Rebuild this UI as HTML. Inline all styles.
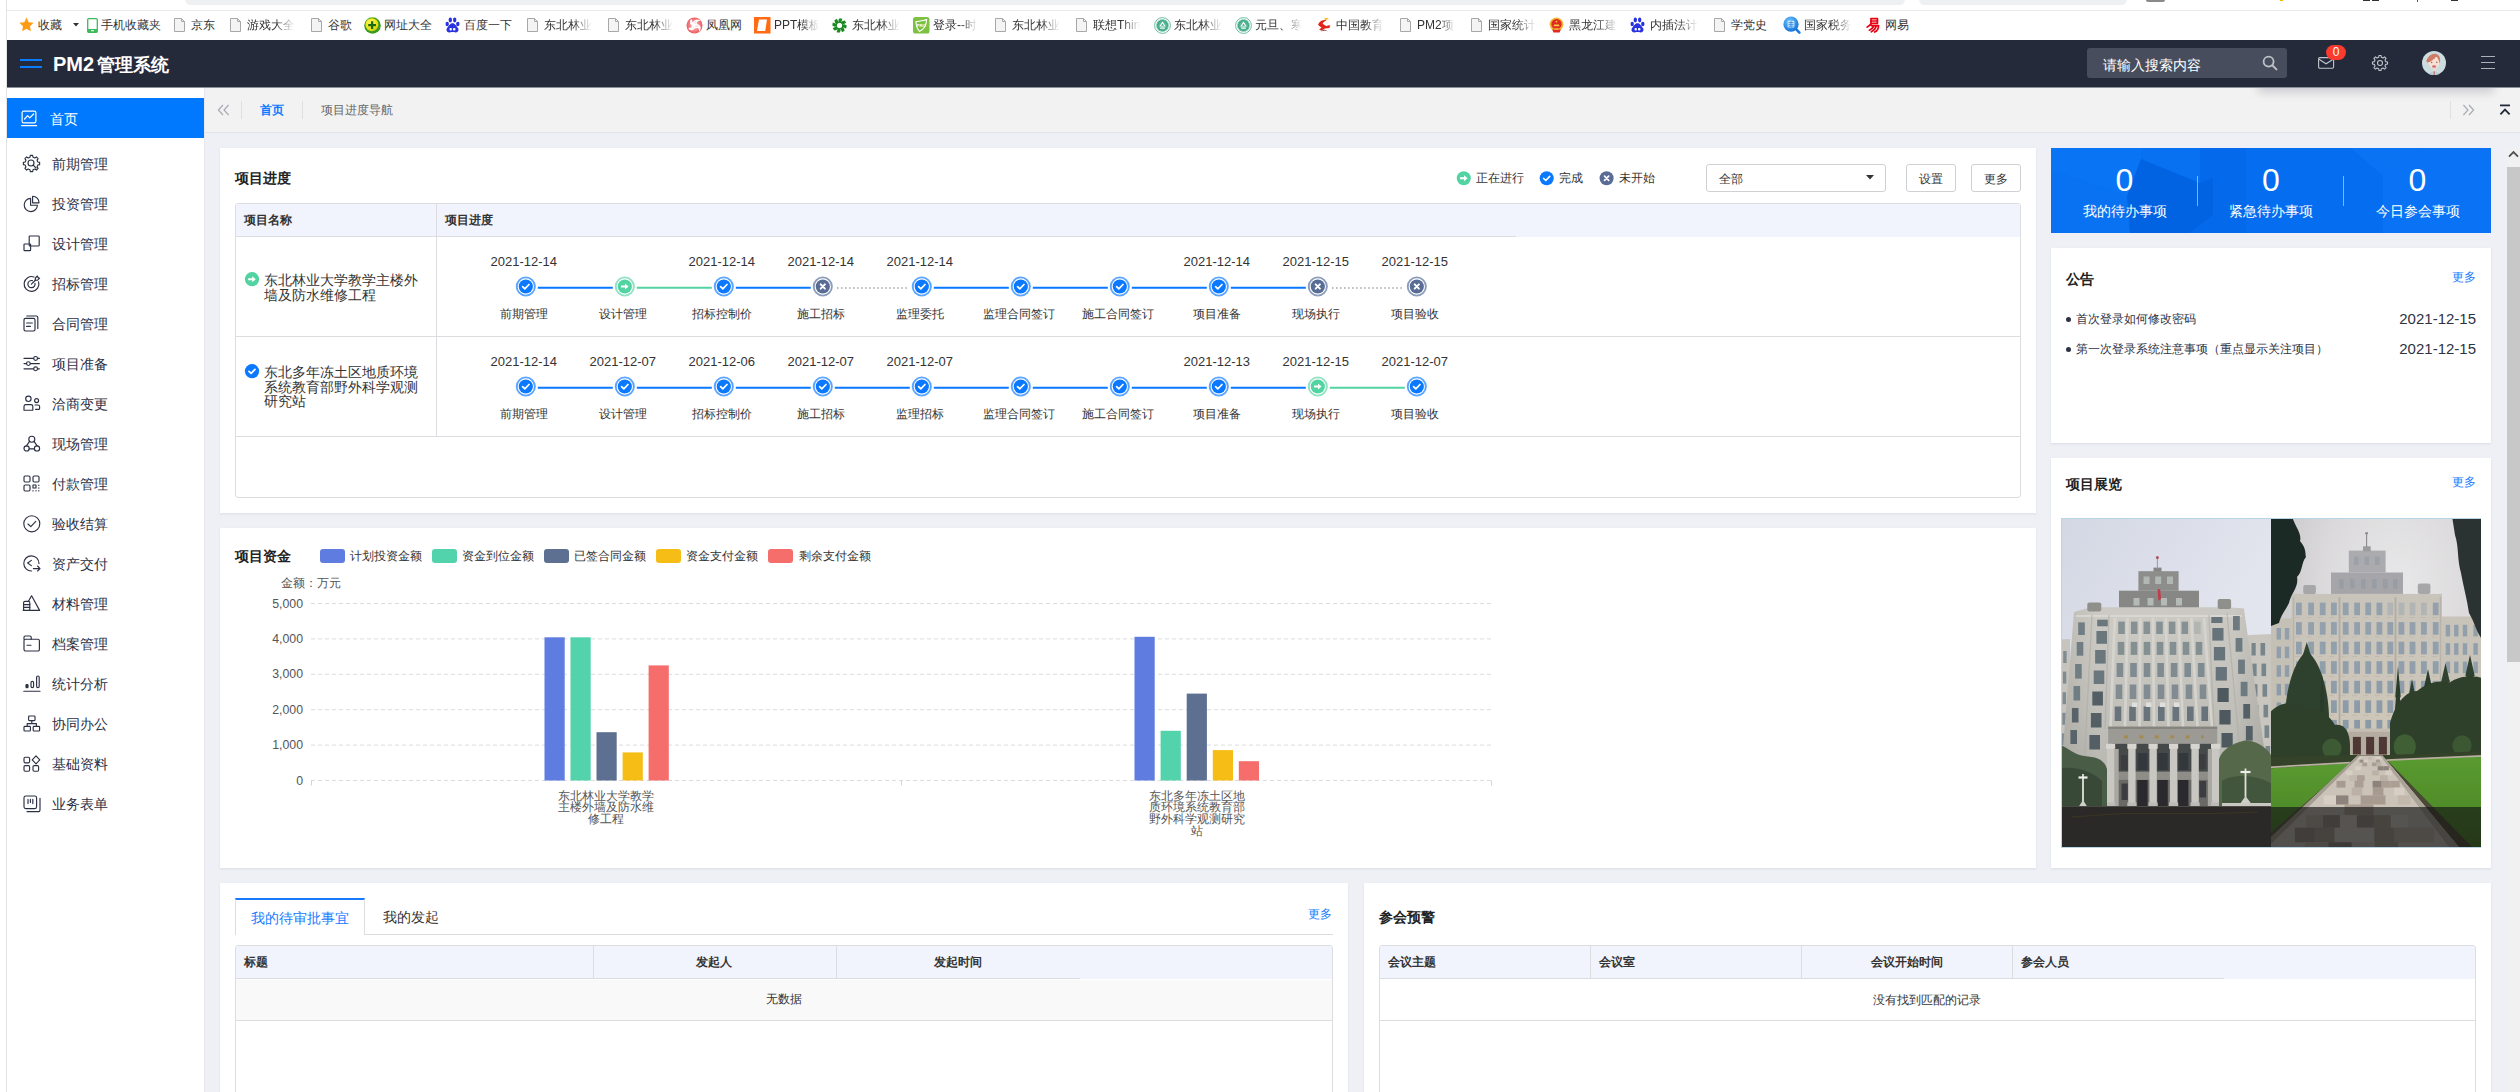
<!DOCTYPE html>
<html lang="zh"><head><meta charset="utf-8"><title>PM2</title>
<style>
*{box-sizing:border-box;margin:0;padding:0}
html,body{width:2520px;height:1092px;overflow:hidden;background:#fff;font-family:"Liberation Sans",sans-serif;color:#333;font-size:12px}
.a{position:absolute}
.t{position:absolute;white-space:nowrap;line-height:20px;height:20px}
.c{text-align:center}
.r{text-align:right}
.b{font-weight:bold}
svg{position:absolute;overflow:visible}
i{display:inline-block;width:1em;text-align:center;font-style:normal}
.panel{position:absolute;background:#fff;box-shadow:0 1px 2px rgba(180,186,200,.35)}
.tbl{position:absolute;border:1px solid #dcdde0;border-radius:3px}
.hl{position:absolute;height:1px;background:#dcdde0}
.vl{position:absolute;width:1px;background:#dcdde0}
.bm{position:absolute;top:15px;height:20px;line-height:20px;font-size:12px;color:#333;white-space:nowrap;overflow:hidden}
.fade{-webkit-mask-image:linear-gradient(90deg,#000 60%,transparent 100%);mask-image:linear-gradient(90deg,#000 60%,transparent 100%)}
.mi{position:absolute;left:52px;font-size:14px;color:#2b3044;height:20px;line-height:20px;white-space:nowrap}
.btn{position:absolute;border:1px solid #cfd0d4;border-radius:3px;background:#fff;font-size:12px;text-align:center;color:#333}
</style></head><body><div class="a" style="left:0;top:0;width:2520px;height:1092px;overflow:hidden">

<div class="a" style="left:0;top:0;width:2520px;height:40px;background:#fff"></div>
<div class="a" style="left:185px;top:-6px;width:1720px;height:11px;border-radius:6px;background:#eff0f2"></div>
<div class="a" style="left:1919px;top:-6px;width:208px;height:11px;border-radius:6px;background:#eff0f2"></div>
<div class="a" style="left:2146px;top:-2px;width:19px;height:4px;border-radius:2px;background:#8a8a8a"></div>
<div class="a" style="left:2363px;top:0;width:7px;height:1px;background:#333"></div><div class="a" style="left:2372px;top:0;width:7px;height:1px;background:#333"></div><div class="a" style="left:2417px;top:0;width:1px;height:2px;background:#555"></div><div class="a" style="left:2451px;top:0;width:7px;height:1px;background:#333"></div><div class="a" style="left:2280px;top:0;width:3px;height:1px;background:#f5b400"></div>
<div class="a" style="left:7px;top:10px;width:2513px;height:1px;background:#ebebeb"></div>
<div class="a" style="left:0;top:0;width:7px;height:1092px;background:#fff;border-right:1px solid #e3e3e3"></div>
<svg class="a" style="left:19px;top:17px" width="15" height="15" viewBox="0 0 15 15" ><path d="M7.5 0.6L9.7 5.2L14.6 5.8L11 9.2L11.9 14.2L7.5 11.8L3.1 14.2L4 9.2L0.4 5.8L5.3 5.2Z" fill="#ff9b12"/></svg>
<div class="bm" style="left:38px"><i>收</i><i>藏</i></div>
<svg class="a" style="left:73px;top:23px" width="6" height="4" viewBox="0 0 6 4" ><path d="M0 0H6L3 3.6Z" fill="#333"/></svg>
<svg class="a" style="left:87px;top:18px" width="11" height="15" viewBox="0 0 11 15" ><rect x="0.7" y="0.7" width="9.6" height="13.6" rx="1.1" fill="#fff" stroke="#3dbb5c" stroke-width="1.3"/><rect x="0.8" y="11" width="9.4" height="3.2" fill="#3dbb5c"/><rect x="4" y="12.2" width="3" height="1" fill="#fff"/></svg>
<div class="bm" style="left:101px"><i>手</i><i>机</i><i>收</i><i>藏</i><i>夹</i></div>
<svg class="a" style="left:174px;top:18px" width="12" height="15" viewBox="0 0 12 15" ><path d="M0.5 0.5H7.5L10.5 3.5V13.5H0.5Z" fill="#f4f4f4" stroke="#a8a8a8" stroke-width="1"/><path d="M7.5 0.5V3.5H10.5" fill="none" stroke="#a8a8a8" stroke-width="1"/></svg>
<div class="bm" style="left:191px"><i>京</i><i>东</i></div>
<svg class="a" style="left:230px;top:18px" width="12" height="15" viewBox="0 0 12 15" ><path d="M0.5 0.5H7.5L10.5 3.5V13.5H0.5Z" fill="#f4f4f4" stroke="#a8a8a8" stroke-width="1"/><path d="M7.5 0.5V3.5H10.5" fill="none" stroke="#a8a8a8" stroke-width="1"/></svg>
<div class="bm fade" style="left:247px;width:48px"><i>游</i><i>戏</i><i>大</i><i>全</i></div>
<svg class="a" style="left:311px;top:18px" width="12" height="15" viewBox="0 0 12 15" ><path d="M0.5 0.5H7.5L10.5 3.5V13.5H0.5Z" fill="#f4f4f4" stroke="#a8a8a8" stroke-width="1"/><path d="M7.5 0.5V3.5H10.5" fill="none" stroke="#a8a8a8" stroke-width="1"/></svg>
<div class="bm" style="left:328px"><i>谷</i><i>歌</i></div>
<svg class="a" style="left:364px;top:17px" width="17" height="17" viewBox="0 0 17 17" ><defs><radialGradient id="g360" cx="42%" cy="38%" r="60%"><stop offset="0" stop-color="#fffb6a"/><stop offset="0.75" stop-color="#ece414"/><stop offset="1" stop-color="#c9d018"/></radialGradient></defs><circle cx="8.5" cy="8.5" r="8.3" fill="#3a9a1e"/><path d="M1.2 5A8.3 8.3 0 0 1 11 0.6A9 9 0 0 0 1.2 5Z" fill="#e9e21a"/><circle cx="7.9" cy="7.7" r="6.5" fill="url(#g360)"/><path d="M4.2 8.1H12M8.1 4.2V12" stroke="#1d6a12" stroke-width="2.3"/></svg>
<div class="bm" style="left:384px"><i>网</i><i>址</i><i>大</i><i>全</i></div>
<svg class="a" style="left:445px;top:17px" width="15" height="16" viewBox="0 0 15 16" ><g fill="#2932e1"><ellipse cx="2.2" cy="7" rx="1.7" ry="2.3"/><ellipse cx="5.3" cy="3" rx="1.7" ry="2.4"/><ellipse cx="9.7" cy="3" rx="1.7" ry="2.4"/><ellipse cx="12.8" cy="7" rx="1.7" ry="2.3"/><path d="M7.5 6.2C10 6.2 11.2 9 12.8 10.8C14.2 12.6 13.4 15.4 10.8 15.4C9.4 15.4 8.6 15 7.5 15C6.4 15 5.6 15.4 4.2 15.4C1.6 15.4 0.8 12.6 2.2 10.8C3.8 9 5 6.2 7.5 6.2Z"/></g><rect x="4.6" y="11" width="2.2" height="2.6" rx="0.8" fill="#fff"/><rect x="8" y="11" width="2.4" height="2.6" rx="0.8" fill="#fff"/></svg>
<div class="bm" style="left:464px"><i>百</i><i>度</i><i>一</i><i>下</i></div>
<svg class="a" style="left:527px;top:18px" width="12" height="15" viewBox="0 0 12 15" ><path d="M0.5 0.5H7.5L10.5 3.5V13.5H0.5Z" fill="#f4f4f4" stroke="#a8a8a8" stroke-width="1"/><path d="M7.5 0.5V3.5H10.5" fill="none" stroke="#a8a8a8" stroke-width="1"/></svg>
<div class="bm fade" style="left:544px;width:48px"><i>东</i><i>北</i><i>林</i><i>业</i></div>
<svg class="a" style="left:608px;top:18px" width="12" height="15" viewBox="0 0 12 15" ><path d="M0.5 0.5H7.5L10.5 3.5V13.5H0.5Z" fill="#f4f4f4" stroke="#a8a8a8" stroke-width="1"/><path d="M7.5 0.5V3.5H10.5" fill="none" stroke="#a8a8a8" stroke-width="1"/></svg>
<div class="bm fade" style="left:625px;width:48px"><i>东</i><i>北</i><i>林</i><i>业</i></div>
<svg class="a" style="left:686px;top:17px" width="17" height="17" viewBox="0 0 17 17" ><defs><radialGradient id="gph" cx="50%" cy="50%" r="55%"><stop offset="0" stop-color="#fff"/><stop offset=".35" stop-color="#f6a0a4"/><stop offset="1" stop-color="#ee4d55"/></radialGradient></defs><circle cx="8.5" cy="8.5" r="8" fill="url(#gph)"/><path d="M8.5 8.5C6.4 5.4 9 2.4 12.2 3.4C9.8 4 9.4 6 10.6 7.6M8.5 8.5C11.8 6.6 14.8 9.4 13.6 12.4C13.2 10.2 11.2 9.6 9.8 10.6M8.5 8.5C8.8 12.4 5 13.6 3 11.2C5 12.2 6.8 11 6.6 9.2M8.5 8.5C4.8 8.4 3.4 4.8 5.6 2.8C4.8 5 6.4 6.6 8.2 6.4" fill="none" stroke="#fff" stroke-width="1.5" stroke-linecap="round"/></svg>
<div class="bm" style="left:706px"><i>凤</i><i>凰</i><i>网</i></div>
<svg class="a" style="left:754px;top:17px" width="17" height="17" viewBox="0 0 17 17" ><rect width="16.5" height="16.5" fill="#ff6a13"/><path d="M5 2.5H13L11.2 14H3Z" fill="#fff"/></svg>
<div class="bm fade" style="left:774px;width:45px">PPT<i>模</i><i>板</i></div>
<svg class="a" style="left:832px;top:18px" width="15" height="15" viewBox="0 0 15 15" ><g fill="#1c8a22"><path d="M6.3 0.4H9.2L8.6 4.9H6.9L5.4 2.6Z" transform="rotate(10 7.5 7.5)"/><path d="M6.3 0.4H9.2L8.6 4.9H6.9L5.4 2.6Z" transform="rotate(55 7.5 7.5)"/><path d="M6.3 0.4H9.2L8.6 4.9H6.9L5.4 2.6Z" transform="rotate(100 7.5 7.5)"/><path d="M6.3 0.4H9.2L8.6 4.9H6.9L5.4 2.6Z" transform="rotate(145 7.5 7.5)"/><path d="M6.3 0.4H9.2L8.6 4.9H6.9L5.4 2.6Z" transform="rotate(190 7.5 7.5)"/><path d="M6.3 0.4H9.2L8.6 4.9H6.9L5.4 2.6Z" transform="rotate(235 7.5 7.5)"/><path d="M6.3 0.4H9.2L8.6 4.9H6.9L5.4 2.6Z" transform="rotate(280 7.5 7.5)"/><path d="M6.3 0.4H9.2L8.6 4.9H6.9L5.4 2.6Z" transform="rotate(325 7.5 7.5)"/></g><circle cx="7.5" cy="7.5" r="3.4" fill="none" stroke="#1c8a22" stroke-width="1.1"/></svg>
<div class="bm fade" style="left:852px;width:48px"><i>东</i><i>北</i><i>林</i><i>业</i></div>
<svg class="a" style="left:913px;top:17px" width="17" height="17" viewBox="0 0 17 17" ><rect width="16.5" height="16.5" rx="2.6" fill="#7cc142"/><path d="M3 4.6C6 4.8 9 3.6 13.6 2.6C13.4 8 11 12.4 6.4 14.4C4 11.6 3 8.4 3 4.6Z" fill="none" stroke="#fff" stroke-width="1.1"/><text x="3.6" y="9.8" font-size="4.4" font-weight="bold" fill="#fff" font-family="Liberation Sans">PRO</text></svg>
<div class="bm fade" style="left:933px;width:45px"><i>登</i><i>录</i>--<i>时</i></div>
<svg class="a" style="left:995px;top:18px" width="12" height="15" viewBox="0 0 12 15" ><path d="M0.5 0.5H7.5L10.5 3.5V13.5H0.5Z" fill="#f4f4f4" stroke="#a8a8a8" stroke-width="1"/><path d="M7.5 0.5V3.5H10.5" fill="none" stroke="#a8a8a8" stroke-width="1"/></svg>
<div class="bm fade" style="left:1012px;width:48px"><i>东</i><i>北</i><i>林</i><i>业</i></div>
<svg class="a" style="left:1076px;top:18px" width="12" height="15" viewBox="0 0 12 15" ><path d="M0.5 0.5H7.5L10.5 3.5V13.5H0.5Z" fill="#f4f4f4" stroke="#a8a8a8" stroke-width="1"/><path d="M7.5 0.5V3.5H10.5" fill="none" stroke="#a8a8a8" stroke-width="1"/></svg>
<div class="bm fade" style="left:1093px;width:47px"><i>联</i><i>想</i>Think</div>
<svg class="a" style="left:1154px;top:17px" width="17" height="17" viewBox="0 0 17 17" ><circle cx="8.5" cy="8.5" r="7.9" fill="#fff" stroke="#6dbda1" stroke-width="1"/><circle cx="8.5" cy="8.5" r="6.2" fill="#3fa886"/><circle cx="8.5" cy="8.5" r="5.9" fill="none" stroke="#c9eadf" stroke-width="1" stroke-dasharray="0.9 0.9"/><circle cx="8.5" cy="8.5" r="4.4" fill="#58b597"/><path d="M8.5 4.6L11.8 9.6H5.2Z" fill="#fff"/><path d="M8.5 6.6L10 8.8H7Z" fill="#3fa886"/><rect x="6.2" y="10.4" width="4.6" height="1.4" fill="#e6f5ef"/></svg>
<div class="bm fade" style="left:1174px;width:48px"><i>东</i><i>北</i><i>林</i><i>业</i></div>
<svg class="a" style="left:1235px;top:17px" width="17" height="17" viewBox="0 0 17 17" ><circle cx="8.5" cy="8.5" r="7.9" fill="#fff" stroke="#6dbda1" stroke-width="1"/><circle cx="8.5" cy="8.5" r="6.2" fill="#3fa886"/><circle cx="8.5" cy="8.5" r="5.9" fill="none" stroke="#c9eadf" stroke-width="1" stroke-dasharray="0.9 0.9"/><circle cx="8.5" cy="8.5" r="4.4" fill="#58b597"/><path d="M8.5 4.6L11.8 9.6H5.2Z" fill="#fff"/><path d="M8.5 6.6L10 8.8H7Z" fill="#3fa886"/><rect x="6.2" y="10.4" width="4.6" height="1.4" fill="#e6f5ef"/></svg>
<div class="bm fade" style="left:1255px;width:47px"><i>元</i><i>旦</i><i>、</i><i>寒</i></div>
<svg class="a" style="left:1316px;top:17px" width="16" height="16" viewBox="0 0 16 16" ><path d="M2 7.5C4 3.8 7.5 2.4 10.6 3.4C8.6 4 7.2 5.2 6.6 6.8L10.6 9.2C11.6 8 13.4 7.8 14.8 8.8C13.8 9.2 13.4 10 13.6 11L8.8 11.4L5.4 13.8L3.2 12.6L5.6 10.6L3.6 9.2Z" fill="#e3241b"/><path d="M8 1.8C9.4 0.6 11.8 0.8 13 2.4C11.6 2 10.4 2.4 9.8 3.2Z" fill="#f7b500"/><path d="M5 14.4L8 12.4L12 14.2L8.4 13.6Z" fill="#6a1a12"/></svg>
<div class="bm fade" style="left:1336px;width:48px"><i>中</i><i>国</i><i>教</i><i>育</i></div>
<svg class="a" style="left:1400px;top:18px" width="12" height="15" viewBox="0 0 12 15" ><path d="M0.5 0.5H7.5L10.5 3.5V13.5H0.5Z" fill="#f4f4f4" stroke="#a8a8a8" stroke-width="1"/><path d="M7.5 0.5V3.5H10.5" fill="none" stroke="#a8a8a8" stroke-width="1"/></svg>
<div class="bm fade" style="left:1417px;width:38px">PM2<i>项</i><i>目</i></div>
<svg class="a" style="left:1471px;top:18px" width="12" height="15" viewBox="0 0 12 15" ><path d="M0.5 0.5H7.5L10.5 3.5V13.5H0.5Z" fill="#f4f4f4" stroke="#a8a8a8" stroke-width="1"/><path d="M7.5 0.5V3.5H10.5" fill="none" stroke="#a8a8a8" stroke-width="1"/></svg>
<div class="bm fade" style="left:1488px;width:48px"><i>国</i><i>家</i><i>统</i><i>计</i></div>
<svg class="a" style="left:1549px;top:17px" width="15" height="16" viewBox="0 0 15 16" ><circle cx="7.5" cy="7.3" r="6.9" fill="#f2b735"/><circle cx="7.5" cy="7.1" r="5.2" fill="#e02a1f"/><path d="M4.4 9.2H10.6L9.8 7.6H5.2Z" fill="#f6c84a"/><circle cx="7.5" cy="4.6" r="0.9" fill="#f6c84a"/><path d="M3.2 12.4H11.8L10.6 15.4H4.4Z" fill="#e02a1f"/><rect x="5.4" y="11.2" width="4.2" height="1.6" fill="#f2b735"/></svg>
<div class="bm fade" style="left:1569px;width:48px"><i>黑</i><i>龙</i><i>江</i><i>建</i></div>
<svg class="a" style="left:1630px;top:17px" width="15" height="16" viewBox="0 0 15 16" ><g fill="#2932e1"><ellipse cx="2.2" cy="7" rx="1.7" ry="2.3"/><ellipse cx="5.3" cy="3" rx="1.7" ry="2.4"/><ellipse cx="9.7" cy="3" rx="1.7" ry="2.4"/><ellipse cx="12.8" cy="7" rx="1.7" ry="2.3"/><path d="M7.5 6.2C10 6.2 11.2 9 12.8 10.8C14.2 12.6 13.4 15.4 10.8 15.4C9.4 15.4 8.6 15 7.5 15C6.4 15 5.6 15.4 4.2 15.4C1.6 15.4 0.8 12.6 2.2 10.8C3.8 9 5 6.2 7.5 6.2Z"/></g><rect x="4.6" y="11" width="2.2" height="2.6" rx="0.8" fill="#fff"/><rect x="8" y="11" width="2.4" height="2.6" rx="0.8" fill="#fff"/></svg>
<div class="bm fade" style="left:1650px;width:48px"><i>内</i><i>插</i><i>法</i><i>计</i></div>
<svg class="a" style="left:1714px;top:18px" width="12" height="15" viewBox="0 0 12 15" ><path d="M0.5 0.5H7.5L10.5 3.5V13.5H0.5Z" fill="#f4f4f4" stroke="#a8a8a8" stroke-width="1"/><path d="M7.5 0.5V3.5H10.5" fill="none" stroke="#a8a8a8" stroke-width="1"/></svg>
<div class="bm" style="left:1731px"><i>学</i><i>党</i><i>史</i></div>
<svg class="a" style="left:1783px;top:16px" width="18" height="18" viewBox="0 0 18 18" ><defs><radialGradient id="gq" cx="40%" cy="30%" r="75%"><stop offset="0" stop-color="#6cc2ff"/><stop offset="1" stop-color="#0d6fd6"/></radialGradient></defs><path d="M12 12L16.4 16.6" stroke="#1b7be0" stroke-width="2.6" stroke-linecap="round"/><circle cx="8" cy="8.2" r="7.6" fill="url(#gq)"/><rect x="4.6" y="4.8" width="6.8" height="6.8" rx="0.8" fill="#dff1ff" opacity=".9"/><path d="M5.4 6.6H10.6M5.4 8.4H10.6M5.4 10.2H10.6M8 5V11.4" stroke="#2b86e0" stroke-width="0.8"/></svg>
<div class="bm fade" style="left:1804px;width:48px"><i>国</i><i>家</i><i>税</i><i>务</i></div>
<svg class="a" style="left:1866px;top:17px" width="15" height="16" viewBox="0 0 15 16" ><g fill="none" stroke="#e60012" stroke-width="1.7" stroke-linecap="round" stroke-linejoin="round"><path d="M5 1.6H11.4V6.4H5Z"/><path d="M5 4H11.4"/><path d="M5.2 6.6C3.6 8.6 2.4 9.4 1.2 10M5.4 8.6H12.6C12.4 11.6 11.4 14 8.6 15M7.8 9C6.8 11 5.2 12.4 3.4 13.2M10.2 9.4C9.4 11.6 7.6 13.6 5.4 14.8"/></g></svg>
<div class="bm" style="left:1885px"><i>网</i><i>易</i></div>
<div class="a" style="left:7px;top:40px;width:2513px;height:47px;background:#252a3b"></div>
<div class="a" style="left:7px;top:87px;width:2513px;height:1px;background:#8d8f96"></div>
<div class="a" style="left:20px;top:59px;width:22px;height:2px;background:#0a7cff"></div><div class="a" style="left:20px;top:66px;width:22px;height:2px;background:#0a7cff"></div>
<div class="t b" style="left:53px;top:51.5px;height:24px;line-height:24px;font-size:20px;color:#fff">PM2<span style="font-size:18px;margin-left:3px"><i>管</i><i>理</i><i>系</i><i>统</i></span></div>
<div class="a" style="left:2087px;top:48px;width:200px;height:30px;border-radius:3px;background:#484d5d"></div>
<div class="t" style="left:2103px;top:55px;font-size:14px;color:#fff"><i>请</i><i>输</i><i>入</i><i>搜</i><i>索</i><i>内</i><i>容</i></div>
<svg class="a" style="left:2262px;top:55px" width="16" height="16" viewBox="0 0 16 16" ><circle cx="6.6" cy="6.6" r="5" fill="none" stroke="#bfc1c7" stroke-width="1.8"/><path d="M10.4 10.4L14.4 14.4" stroke="#bfc1c7" stroke-width="2" stroke-linecap="round"/></svg>
<svg class="a" style="left:2317.6px;top:57px" width="18" height="14" viewBox="0 0 18 14" ><rect x="0.6" y="0.6" width="15" height="10.6" rx="1.2" fill="none" stroke="#c3c5cc" stroke-width="1.1"/><path d="M1 2.2L8.1 6.8L15.2 2.2" fill="none" stroke="#c3c5cc" stroke-width="1.1"/></svg>
<div class="a c" style="left:2326px;top:45px;width:20px;height:15px;border-radius:8px;background:#fc3a2e;color:#fff;font-size:12px;line-height:15px">0</div>
<svg class="a" style="left:2371px;top:54px" width="18" height="18" viewBox="0 0 18 18" ><path d="M7.65 3.36 L7.93 1.48 L10.07 1.48 L10.35 3.36 L12.03 4.05 L13.56 2.92 L15.08 4.44 L13.95 5.97 L14.64 7.65 L16.52 7.93 L16.52 10.07 L14.64 10.35 L13.95 12.03 L15.08 13.56 L13.56 15.08 L12.03 13.95 L10.35 14.64 L10.07 16.52 L7.93 16.52 L7.65 14.64 L5.97 13.95 L4.44 15.08 L2.92 13.56 L4.05 12.03 L3.36 10.35 L1.48 10.07 L1.48 7.93 L3.36 7.65 L4.05 5.97 L2.92 4.44 L4.44 2.92 L5.97 4.05Z" fill="none" stroke="#c3c5cc" stroke-width="1.1" stroke-linejoin="round"/><circle cx="9" cy="9" r="2.5" fill="none" stroke="#c3c5cc" stroke-width="1.1"/></svg>
<svg class="a" style="left:2421.9px;top:51.1px" width="24" height="24" viewBox="0 0 24 24" ><defs><clipPath id="av"><circle cx="12" cy="12" r="12"/></clipPath></defs><g clip-path="url(#av)"><rect width="24" height="24" fill="#cddce0"/><path d="M7.4 24C7.8 21.4 9.4 20.6 10.8 20.4H13.6C15 20.6 16.4 21.4 16.8 24Z" fill="#b4cad6"/><rect x="10.9" y="17.6" width="2.6" height="6.6" fill="#f7d6c9"/><path d="M11.5 20.2H12.9V24H11.5Z" fill="#b3726a"/><g transform="translate(12 18.2) scale(1.05 1.25) translate(-12 -19)"><ellipse cx="12.1" cy="13.4" rx="4.9" ry="5.1" fill="#fbe0d4"/><circle cx="7.3" cy="13.9" r="0.9" fill="#fbe0d4"/><circle cx="16.9" cy="13.8" r="0.9" fill="#fbe0d4"/><path d="M4.6 12.4C6.4 9 9 6.6 12.4 6.6C15.4 6.4 18 8.6 17.9 12C17.9 13 17.6 13.8 17.3 14.4C17 12.6 16.4 11.2 15.4 10.2C14.2 9.6 12.6 10.2 11 11.4C9.4 12.6 7.6 13.6 5.8 13.6C5.4 13.4 4.9 13 4.6 12.4Z" fill="#cf7c67"/><path d="M13.4 9.4C14.2 9 15 9.2 15.4 9.8C14.6 10 13.8 10.4 13 11Z" fill="#fff" opacity=".9"/><circle cx="9.8" cy="13.6" r="0.65" fill="#85625a"/><circle cx="14.7" cy="13.5" r="0.65" fill="#85625a"/><ellipse cx="12.1" cy="16.8" rx="2" ry="1.05" fill="#cb7472"/></g></g></svg>
<div class="a" style="left:2481px;top:56px;width:14px;height:1px;background:#aeb0b8"></div><div class="a" style="left:2481px;top:62px;width:14px;height:1px;background:#aeb0b8"></div><div class="a" style="left:2481px;top:68px;width:14px;height:1px;background:#aeb0b8"></div>
<div class="a" style="left:7px;top:88px;width:197px;height:1004px;background:#fff"></div>
<div class="a" style="left:204px;top:88px;width:1px;height:1004px;background:#e6e8ee"></div>
<div class="a" style="left:7px;top:98px;width:197px;height:40px;background:#0079fe"></div>
<svg class="a" style="left:21px;top:110px" width="17" height="17" viewBox="0 0 17 17" ><g fill="none" stroke="#fff" stroke-width="1.2" stroke-linecap="round" stroke-linejoin="round"><rect x="1.1" y="1.2" width="13.8" height="11.6" rx="1.6"/><path d="M3.6 9L6.6 5.6L8.8 7.8L12.6 4"/><path d="M0.6 15.6H15.6"/></g></svg>
<div class="mi" style="left:50px;top:109px;color:#fff"><i>首</i><i>页</i></div>
<svg class="a" style="left:22.7px;top:155.3px" width="18" height="18" viewBox="0 0 18 18" ><g fill="none" stroke="#2b3044" stroke-width="1.15" stroke-linecap="round" stroke-linejoin="round"><path d="M6.98 2.18 L7.34 0.38 L9.66 0.38 L10.02 2.18 L11.90 2.96 L13.42 1.94 L15.06 3.58 L14.04 5.10 L14.82 6.98 L16.62 7.34 L16.62 9.66 L14.82 10.02 L14.04 11.90 L15.06 13.42 L13.42 15.06 L11.90 14.04 L10.02 14.82 L9.66 16.62 L7.34 16.62 L6.98 14.82 L5.10 14.04 L3.58 15.06 L1.94 13.42 L2.96 11.90 L2.18 10.02 L0.38 9.66 L0.38 7.34 L2.18 6.98 L2.96 5.10 L1.94 3.58 L3.58 1.94 L5.10 2.96Z"/><circle cx="8" cy="8" r="3"/><path d="M10.2 10.2L13 13"/></g></svg>
<div class="mi" style="top:154px"><i>前</i><i>期</i><i>管</i><i>理</i></div>
<svg class="a" style="left:22.7px;top:195.3px" width="18" height="18" viewBox="0 0 18 18" ><g fill="none" stroke="#2b3044" stroke-width="1.15" stroke-linecap="round" stroke-linejoin="round"><path d="M7.6 3.4A6.6 6.6 0 1 0 14.4 10.2H7.6Z"/><path d="M9.6 1.2A6.4 6.4 0 0 1 16 7.8H9.6Z"/></g></svg>
<div class="mi" style="top:194px"><i>投</i><i>资</i><i>管</i><i>理</i></div>
<svg class="a" style="left:22.7px;top:235.3px" width="18" height="18" viewBox="0 0 18 18" ><g fill="none" stroke="#2b3044" stroke-width="1.15" stroke-linecap="round" stroke-linejoin="round"><rect x="6.2" y="1" width="10" height="10" rx="0.8"/><rect x="1" y="9" width="6.6" height="6.6" rx="0.6"/></g></svg>
<div class="mi" style="top:234px"><i>设</i><i>计</i><i>管</i><i>理</i></div>
<svg class="a" style="left:22.7px;top:275.3px" width="18" height="18" viewBox="0 0 18 18" ><g fill="none" stroke="#2b3044" stroke-width="1.15" stroke-linecap="round" stroke-linejoin="round"><path d="M11 2A7.4 7.4 0 1 0 15.6 6.8"/><path d="M9.4 5.6A3.6 3.6 0 1 0 12 8.4"/><path d="M8.4 9.2L12.6 5"/><path d="M12.2 5.2L12.4 3L14.4 1L15 2.6L16.6 3.2L14.6 5.2Z"/></g></svg>
<div class="mi" style="top:274px"><i>招</i><i>标</i><i>管</i><i>理</i></div>
<svg class="a" style="left:22.7px;top:315.3px" width="18" height="18" viewBox="0 0 18 18" ><g fill="none" stroke="#2b3044" stroke-width="1.15" stroke-linecap="round" stroke-linejoin="round"><rect x="1" y="3.4" width="11" height="12.6" rx="1.4"/><path d="M3.8 1H13.4A1.4 1.4 0 0 1 14.8 2.4V13.6"/><path d="M3.6 8H9.4M3.6 11.4H7.4"/></g></svg>
<div class="mi" style="top:314px"><i>合</i><i>同</i><i>管</i><i>理</i></div>
<svg class="a" style="left:22.7px;top:355.3px" width="18" height="18" viewBox="0 0 18 18" ><g fill="none" stroke="#2b3044" stroke-width="1.15" stroke-linecap="round" stroke-linejoin="round"><path d="M1 3.4H10.6M14.6 3.4H16.4M1 8.6H3.4M7.4 8.6H16.4M1 13.8H10.6M14.6 13.8H16.4"/><circle cx="12.6" cy="3.4" r="1.9"/><circle cx="5.4" cy="8.6" r="1.9"/><circle cx="12.6" cy="13.8" r="1.9"/></g></svg>
<div class="mi" style="top:354px"><i>项</i><i>目</i><i>准</i><i>备</i></div>
<svg class="a" style="left:22.7px;top:395.3px" width="18" height="18" viewBox="0 0 18 18" ><g fill="none" stroke="#2b3044" stroke-width="1.15" stroke-linecap="round" stroke-linejoin="round"><circle cx="5.4" cy="3.8" r="2.7"/><path d="M1 15.2V11.4A1.8 1.8 0 0 1 2.8 9.6H8A1.8 1.8 0 0 1 9.8 11.4V15.2Z"/><circle cx="13.6" cy="5.6" r="2"/><path d="M12 10H15A1.6 1.6 0 0 1 16.6 11.6V13.4A1 1 0 0 1 15.6 14.4H12.6"/></g></svg>
<div class="mi" style="top:394px"><i>洽</i><i>商</i><i>变</i><i>更</i></div>
<svg class="a" style="left:22.7px;top:435.3px" width="18" height="18" viewBox="0 0 18 18" ><g fill="none" stroke="#2b3044" stroke-width="1.15" stroke-linecap="round" stroke-linejoin="round"><circle cx="8.8" cy="4.2" r="3"/><circle cx="3.6" cy="13.4" r="2.6"/><circle cx="14" cy="13.4" r="2.6"/><path d="M6.6 6.4L3.4 10.8M11 6.4L14.2 10.8M6.2 13.8H11.4"/></g></svg>
<div class="mi" style="top:434px"><i>现</i><i>场</i><i>管</i><i>理</i></div>
<svg class="a" style="left:22.7px;top:475.3px" width="18" height="18" viewBox="0 0 18 18" ><g fill="none" stroke="#2b3044" stroke-width="1.15" stroke-linecap="round" stroke-linejoin="round"><rect x="1" y="1" width="6" height="6" rx="1.2"/><rect x="10" y="1" width="6" height="6" rx="1.2"/><rect x="1" y="10" width="6" height="6" rx="1.2"/><path d="M10 10H13V13H10ZM10 15.6V16M13 15.6V16M15.8 10V10.4M15.8 12.8V13.2M15.8 15.6V16"/></g></svg>
<div class="mi" style="top:474px"><i>付</i><i>款</i><i>管</i><i>理</i></div>
<svg class="a" style="left:22.7px;top:515.3px" width="18" height="18" viewBox="0 0 18 18" ><g fill="none" stroke="#2b3044" stroke-width="1.15" stroke-linecap="round" stroke-linejoin="round"><circle cx="8.8" cy="8.8" r="8"/><path d="M5 9L7.8 11.6L12.8 6.4"/></g></svg>
<div class="mi" style="top:514px"><i>验</i><i>收</i><i>结</i><i>算</i></div>
<svg class="a" style="left:22.7px;top:555.3px" width="18" height="18" viewBox="0 0 18 18" ><g fill="none" stroke="#2b3044" stroke-width="1.15" stroke-linecap="round" stroke-linejoin="round"><path d="M16 8.6A7.6 7.6 0 1 0 8.6 16"/><path d="M8.4 5.4L4.6 8L8.4 10.6"/><path d="M10.4 13.6H17M14.6 11L17 13.6L14.6 16"/></g></svg>
<div class="mi" style="top:554px"><i>资</i><i>产</i><i>交</i><i>付</i></div>
<svg class="a" style="left:22.7px;top:595.3px" width="18" height="18" viewBox="0 0 18 18" ><g fill="none" stroke="#2b3044" stroke-width="1.15" stroke-linecap="round" stroke-linejoin="round"><path d="M0.2 15.4L8.6 0.8L16.6 15.4Z" /><path d="M0.6 7.8V14A1.4 1.4 0 0 0 2 15.4H5.4A1.4 1.4 0 0 0 6.8 14V7.8A1.4 1.4 0 0 0 5.4 6.4H2A1.4 1.4 0 0 0 0.6 7.8Z" fill="#fff"/><path d="M0.6 9.6H6.8M0.6 12.4H6.8"/></g></svg>
<div class="mi" style="top:594px"><i>材</i><i>料</i><i>管</i><i>理</i></div>
<svg class="a" style="left:22.7px;top:635.3px" width="18" height="18" viewBox="0 0 18 18" ><g fill="none" stroke="#2b3044" stroke-width="1.15" stroke-linecap="round" stroke-linejoin="round"><path d="M1 4.2V2.2A1.2 1.2 0 0 1 2.2 1H7A1.2 1.2 0 0 1 8.2 2.2V4.2"/><rect x="1" y="4.2" width="15.4" height="11.8" rx="1.6"/><path d="M4 10.2H8"/></g></svg>
<div class="mi" style="top:634px"><i>档</i><i>案</i><i>管</i><i>理</i></div>
<svg class="a" style="left:22.7px;top:675.3px" width="18" height="18" viewBox="0 0 18 18" ><g fill="none" stroke="#2b3044" stroke-width="1.15" stroke-linecap="round" stroke-linejoin="round"><path d="M0.8 16.2H17"/><rect x="13.6" y="1" width="2.6" height="11.6" rx="1.3"/><rect x="8" y="6.4" width="2.6" height="6.2" rx="1.3"/><rect x="3" y="9.6" width="2" height="3" rx="0.6" fill="#2b3044"/></g></svg>
<div class="mi" style="top:674px"><i>统</i><i>计</i><i>分</i><i>析</i></div>
<svg class="a" style="left:22.7px;top:715.3px" width="18" height="18" viewBox="0 0 18 18" ><g fill="none" stroke="#2b3044" stroke-width="1.15" stroke-linecap="round" stroke-linejoin="round"><rect x="5.6" y="1" width="6.4" height="4.6" rx="0.8"/><rect x="1" y="11.4" width="6.4" height="4.6" rx="0.8"/><rect x="10.2" y="11.4" width="6.4" height="4.6" rx="0.8"/><path d="M8.8 5.6V8.6M4.2 11.4V8.6H13.4V11.4"/></g></svg>
<div class="mi" style="top:714px"><i>协</i><i>同</i><i>办</i><i>公</i></div>
<svg class="a" style="left:22.7px;top:755.3px" width="18" height="18" viewBox="0 0 18 18" ><g fill="none" stroke="#2b3044" stroke-width="1.15" stroke-linecap="round" stroke-linejoin="round"><rect x="1" y="2.2" width="5.6" height="5.6" rx="1.2"/><rect x="1" y="10.6" width="5.6" height="5.6" rx="1.2"/><rect x="10" y="10.6" width="5.6" height="5.6" rx="1.2"/><path d="M13 0.8L16.8 4.8L13 8.8L9.2 4.8Z"/></g></svg>
<div class="mi" style="top:754px"><i>基</i><i>础</i><i>资</i><i>料</i></div>
<svg class="a" style="left:22.7px;top:795.3px" width="18" height="18" viewBox="0 0 18 18" ><g fill="none" stroke="#2b3044" stroke-width="1.15" stroke-linecap="round" stroke-linejoin="round"><rect x="1" y="1" width="12.6" height="12.6" rx="1.8"/><path d="M5 4.4V8.6M7.4 4.4V7.4M9.8 4.4V8.6"/><path d="M4 16.6H15.4A1.6 1.6 0 0 0 17 15V3.2"/></g></svg>
<div class="mi" style="top:794px"><i>业</i><i>务</i><i>表</i><i>单</i></div>
<div class="a" style="left:205px;top:88px;width:2315px;height:44px;background:#f2f2f2"></div>
<div class="a" style="left:205px;top:132px;width:2315px;height:1px;background:#e2e3e8"></div>
<div class="a" style="left:2236px;top:88px;width:280px;height:26px;overflow:hidden"><div class="a" style="left:22px;top:-12px;width:236px;height:17px;background:rgba(70,70,95,.2);filter:blur(4.5px)"></div></div>
<svg class="a" style="left:217px;top:104px" width="13" height="12" viewBox="0 0 13 12" ><path d="M6 1L1.4 6L6 11M11.6 1L7 6L11.6 11" fill="none" stroke="#a9abb3" stroke-width="1.2"/></svg>
<div class="a" style="left:241px;top:101px;width:1px;height:18px;background:#e0e0e0"></div>
<div class="t b" style="left:260px;top:100px;font-size:12px;color:#0d7aff"><i>首</i><i>页</i></div>
<div class="a" style="left:302px;top:101px;width:1px;height:18px;background:#e0e0e0"></div>
<div class="t" style="left:321px;top:100px;font-size:12px;color:#666"><i>项</i><i>目</i><i>进</i><i>度</i><i>导</i><i>航</i></div>
<div class="a" style="left:2450px;top:101px;width:1px;height:18px;background:#e0e0e0"></div>
<svg class="a" style="left:2462px;top:104px" width="13" height="12" viewBox="0 0 13 12" ><path d="M1.4 1L6 6L1.4 11M7 1L11.6 6L7 11" fill="none" stroke="#a9abb3" stroke-width="1.2"/></svg>
<svg class="a" style="left:2499px;top:104px" width="12" height="12" viewBox="0 0 12 12" ><path d="M1 1.4H11" stroke="#252a3b" stroke-width="1.8"/><path d="M1.4 10.4L6 5.6L10.6 10.4" fill="none" stroke="#252a3b" stroke-width="1.8"/></svg>
<div class="a" style="left:205px;top:133px;width:2302px;height:959px;background:#eef0f5"></div>
<div class="a" style="left:2507px;top:148px;width:13px;height:944px;background:#f1f1f1"></div>
<div class="a" style="left:2507px;top:133px;width:13px;height:15px;background:#eef0f5"></div>
<div class="a" style="left:2507px;top:167px;width:13px;height:495px;background:#c8c8c8"></div>
<svg class="a" style="left:2508px;top:150px" width="11" height="8" viewBox="0 0 11 8" ><path d="M1 6.6L5.5 2L10 6.6" fill="none" stroke="#505050" stroke-width="1.8"/></svg>
<div class="panel" style="left:220px;top:148px;width:1816px;height:365px"></div>
<div class="t b" style="left:235px;top:168px;font-size:14px;color:#222"><i>项</i><i>目</i><i>进</i><i>度</i></div>
<svg class="a" style="left:0px;top:0px" width="2520" height="300" viewBox="0 0 2520 300" ><g transform="translate(1463.8 178.3)"><circle r="7" fill="#52d3a2"/><path d="M-3.8 -1H0.2V-3L3.8 0L0.2 3V1H-3.8Z" fill="#fff"/></g><g transform="translate(1546.7 178.3)"><circle r="7" fill="#0a78ff"/><path d="M-3 0.2L-0.9 2.2L3 -1.9" fill="none" stroke="#fff" stroke-width="1.7" stroke-linecap="round" stroke-linejoin="round"/></g><g transform="translate(1606.6 178.3)"><circle r="7" fill="#586c96"/><path d="M-2.1 -2.1L2.1 2.1M2.1 -2.1L-2.1 2.1" fill="none" stroke="#fff" stroke-width="1.7" stroke-linecap="round"/></g></svg>
<div class="t" style="left:1476px;top:168px;font-size:12px"><i>正</i><i>在</i><i>进</i><i>行</i></div>
<div class="t" style="left:1559px;top:168px;font-size:12px"><i>完</i><i>成</i></div>
<div class="t" style="left:1619px;top:168px;font-size:12px"><i>未</i><i>开</i><i>始</i></div>
<div class="btn" style="left:1706px;top:164px;width:180px;height:28px"></div>
<div class="t" style="left:1719px;top:169px;font-size:12px"><i>全</i><i>部</i></div>
<svg class="a" style="left:1866px;top:175px" width="8" height="5" viewBox="0 0 8 5" ><path d="M0 0H8L4 4.4Z" fill="#333"/></svg>
<div class="btn" style="left:1906px;top:164px;width:50px;height:28px;line-height:28px"><i>设</i><i>置</i></div>
<div class="btn" style="left:1971px;top:164px;width:50px;height:28px;line-height:28px"><i>更</i><i>多</i></div>
<div class="tbl" style="left:235px;top:203px;width:1786px;height:295px;overflow:hidden"><div class="a" style="left:0;top:0;width:1786px;height:33px;background:#f1f4fc"></div></div>
<div class="hl" style="left:236px;top:236px;width:1280px"></div>
<div class="hl" style="left:236px;top:336px;width:1784px"></div>
<div class="hl" style="left:236px;top:436px;width:1784px"></div>
<div class="vl" style="left:436px;top:204px;height:233px"></div>
<div class="t b" style="left:244px;top:210px;font-size:12px"><i>项</i><i>目</i><i>名</i><i>称</i></div>
<div class="t b" style="left:445px;top:210px;font-size:12px"><i>项</i><i>目</i><i>进</i><i>度</i></div>
<svg class="a" style="left:0px;top:0px" width="600" height="500" viewBox="0 0 600 500" ><g transform="translate(252 279.2)"><circle r="7.1" fill="#52d3a2"/><path d="M-3.8 -1H0.2V-3L3.8 0L0.2 3V1H-3.8Z" fill="#fff"/></g><g transform="translate(252 371.2)"><circle r="7.1" fill="#0a78ff"/><path d="M-3 0.2L-0.9 2.2L3 -1.9" fill="none" stroke="#fff" stroke-width="1.7" stroke-linecap="round" stroke-linejoin="round"/></g></svg>
<div class="a" style="left:264px;top:273px;width:160px;font-size:14px;line-height:14.6px;color:#333"><i>东</i><i>北</i><i>林</i><i>业</i><i>大</i><i>学</i><i>教</i><i>学</i><i>主</i><i>楼</i><i>外</i><br><i>墙</i><i>及</i><i>防</i><i>水</i><i>维</i><i>修</i><i>工</i><i>程</i></div>
<div class="a" style="left:264px;top:365.3px;width:160px;font-size:14px;line-height:14.6px;color:#333"><i>东</i><i>北</i><i>多</i><i>年</i><i>冻</i><i>土</i><i>区</i><i>地</i><i>质</i><i>环</i><i>境</i><br><i>系</i><i>统</i><i>教</i><i>育</i><i>部</i><i>野</i><i>外</i><i>科</i><i>学</i><i>观</i><i>测</i><br><i>研</i><i>究</i><i>站</i></div>
<div class="t c" style="left:473.79999999999995px;top:251.5px;width:100px;font-size:13px;color:#333">2021-12-14</div>
<div class="t c" style="left:473.79999999999995px;top:303.5px;width:100px;font-size:12px;color:#333"><i>前</i><i>期</i><i>管</i><i>理</i></div>
<div class="t c" style="left:572.8px;top:303.5px;width:100px;font-size:12px;color:#333"><i>设</i><i>计</i><i>管</i><i>理</i></div>
<div class="t c" style="left:671.8px;top:251.5px;width:100px;font-size:13px;color:#333">2021-12-14</div>
<div class="t c" style="left:671.8px;top:303.5px;width:100px;font-size:12px;color:#333"><i>招</i><i>标</i><i>控</i><i>制</i><i>价</i></div>
<div class="t c" style="left:770.8px;top:251.5px;width:100px;font-size:13px;color:#333">2021-12-14</div>
<div class="t c" style="left:770.8px;top:303.5px;width:100px;font-size:12px;color:#333"><i>施</i><i>工</i><i>招</i><i>标</i></div>
<div class="t c" style="left:869.8px;top:251.5px;width:100px;font-size:13px;color:#333">2021-12-14</div>
<div class="t c" style="left:869.8px;top:303.5px;width:100px;font-size:12px;color:#333"><i>监</i><i>理</i><i>委</i><i>托</i></div>
<div class="t c" style="left:968.8px;top:303.5px;width:100px;font-size:12px;color:#333"><i>监</i><i>理</i><i>合</i><i>同</i><i>签</i><i>订</i></div>
<div class="t c" style="left:1067.8px;top:303.5px;width:100px;font-size:12px;color:#333"><i>施</i><i>工</i><i>合</i><i>同</i><i>签</i><i>订</i></div>
<div class="t c" style="left:1166.8px;top:251.5px;width:100px;font-size:13px;color:#333">2021-12-14</div>
<div class="t c" style="left:1166.8px;top:303.5px;width:100px;font-size:12px;color:#333"><i>项</i><i>目</i><i>准</i><i>备</i></div>
<div class="t c" style="left:1265.8px;top:251.5px;width:100px;font-size:13px;color:#333">2021-12-15</div>
<div class="t c" style="left:1265.8px;top:303.5px;width:100px;font-size:12px;color:#333"><i>现</i><i>场</i><i>执</i><i>行</i></div>
<div class="t c" style="left:1364.8px;top:251.5px;width:100px;font-size:13px;color:#333">2021-12-15</div>
<div class="t c" style="left:1364.8px;top:303.5px;width:100px;font-size:12px;color:#333"><i>项</i><i>目</i><i>验</i><i>收</i></div>
<svg class="a"  style="pointer-events:none;left:0px;top:0px" width="2520" height="1092" viewBox="0 0 2520 1092" ><path d="M537.8 287.8H612.8" stroke="#0a78ff" stroke-width="2"/><g transform="translate(525.8 286.5)"><circle r="9.1" fill="#fff" stroke="#5aa5ff" stroke-width="1.9"/><circle r="7.1" fill="#0a78ff"/><path d="M-3.2 0.2L-1 2.4L3.2 -2" fill="none" stroke="#fff" stroke-width="1.7" stroke-linecap="round" stroke-linejoin="round"/></g><path d="M636.8 287.8H711.8" stroke="#52d3a2" stroke-width="2"/><g transform="translate(624.8 286.5)"><circle r="9.1" fill="#fff" stroke="#8fe2c3" stroke-width="1.9"/><circle r="7.1" fill="#52d3a2"/><path d="M-3.8 -1H0.2V-3L3.8 0L0.2 3V1H-3.8Z" fill="#fff"/></g><path d="M735.8 287.8H810.8" stroke="#0a78ff" stroke-width="2"/><g transform="translate(723.8 286.5)"><circle r="9.1" fill="#fff" stroke="#5aa5ff" stroke-width="1.9"/><circle r="7.1" fill="#0a78ff"/><path d="M-3.2 0.2L-1 2.4L3.2 -2" fill="none" stroke="#fff" stroke-width="1.7" stroke-linecap="round" stroke-linejoin="round"/></g><path d="M837.0 287.9H909.3" stroke="#a2a2a4" stroke-width="1.5" stroke-dasharray="1.5 2.52"/><g transform="translate(822.8 286.5)"><circle r="9.1" fill="#fff" stroke="#8c9cbc" stroke-width="1.9"/><circle r="7.1" fill="#586c96"/><path d="M-2.1 -2.1L2.1 2.1M2.1 -2.1L-2.1 2.1" fill="none" stroke="#fff" stroke-width="2" stroke-linecap="round"/></g><path d="M933.8 287.8H1008.8" stroke="#0a78ff" stroke-width="2"/><g transform="translate(921.8 286.5)"><circle r="9.1" fill="#fff" stroke="#5aa5ff" stroke-width="1.9"/><circle r="7.1" fill="#0a78ff"/><path d="M-3.2 0.2L-1 2.4L3.2 -2" fill="none" stroke="#fff" stroke-width="1.7" stroke-linecap="round" stroke-linejoin="round"/></g><path d="M1032.8 287.8H1107.8" stroke="#0a78ff" stroke-width="2"/><g transform="translate(1020.8 286.5)"><circle r="9.1" fill="#fff" stroke="#5aa5ff" stroke-width="1.9"/><circle r="7.1" fill="#0a78ff"/><path d="M-3.2 0.2L-1 2.4L3.2 -2" fill="none" stroke="#fff" stroke-width="1.7" stroke-linecap="round" stroke-linejoin="round"/></g><path d="M1131.8 287.8H1206.8" stroke="#0a78ff" stroke-width="2"/><g transform="translate(1119.8 286.5)"><circle r="9.1" fill="#fff" stroke="#5aa5ff" stroke-width="1.9"/><circle r="7.1" fill="#0a78ff"/><path d="M-3.2 0.2L-1 2.4L3.2 -2" fill="none" stroke="#fff" stroke-width="1.7" stroke-linecap="round" stroke-linejoin="round"/></g><path d="M1230.8 287.8H1305.8" stroke="#0a78ff" stroke-width="2"/><g transform="translate(1218.8 286.5)"><circle r="9.1" fill="#fff" stroke="#5aa5ff" stroke-width="1.9"/><circle r="7.1" fill="#0a78ff"/><path d="M-3.2 0.2L-1 2.4L3.2 -2" fill="none" stroke="#fff" stroke-width="1.7" stroke-linecap="round" stroke-linejoin="round"/></g><path d="M1332.0 287.9H1404.3" stroke="#a2a2a4" stroke-width="1.5" stroke-dasharray="1.5 2.52"/><g transform="translate(1317.8 286.5)"><circle r="9.1" fill="#fff" stroke="#8c9cbc" stroke-width="1.9"/><circle r="7.1" fill="#586c96"/><path d="M-2.1 -2.1L2.1 2.1M2.1 -2.1L-2.1 2.1" fill="none" stroke="#fff" stroke-width="2" stroke-linecap="round"/></g><g transform="translate(1416.8 286.5)"><circle r="9.1" fill="#fff" stroke="#8c9cbc" stroke-width="1.9"/><circle r="7.1" fill="#586c96"/><path d="M-2.1 -2.1L2.1 2.1M2.1 -2.1L-2.1 2.1" fill="none" stroke="#fff" stroke-width="2" stroke-linecap="round"/></g></svg>
<div class="t c" style="left:473.79999999999995px;top:351.5px;width:100px;font-size:13px;color:#333">2021-12-14</div>
<div class="t c" style="left:473.79999999999995px;top:403.5px;width:100px;font-size:12px;color:#333"><i>前</i><i>期</i><i>管</i><i>理</i></div>
<div class="t c" style="left:572.8px;top:351.5px;width:100px;font-size:13px;color:#333">2021-12-07</div>
<div class="t c" style="left:572.8px;top:403.5px;width:100px;font-size:12px;color:#333"><i>设</i><i>计</i><i>管</i><i>理</i></div>
<div class="t c" style="left:671.8px;top:351.5px;width:100px;font-size:13px;color:#333">2021-12-06</div>
<div class="t c" style="left:671.8px;top:403.5px;width:100px;font-size:12px;color:#333"><i>招</i><i>标</i><i>控</i><i>制</i><i>价</i></div>
<div class="t c" style="left:770.8px;top:351.5px;width:100px;font-size:13px;color:#333">2021-12-07</div>
<div class="t c" style="left:770.8px;top:403.5px;width:100px;font-size:12px;color:#333"><i>施</i><i>工</i><i>招</i><i>标</i></div>
<div class="t c" style="left:869.8px;top:351.5px;width:100px;font-size:13px;color:#333">2021-12-07</div>
<div class="t c" style="left:869.8px;top:403.5px;width:100px;font-size:12px;color:#333"><i>监</i><i>理</i><i>招</i><i>标</i></div>
<div class="t c" style="left:968.8px;top:403.5px;width:100px;font-size:12px;color:#333"><i>监</i><i>理</i><i>合</i><i>同</i><i>签</i><i>订</i></div>
<div class="t c" style="left:1067.8px;top:403.5px;width:100px;font-size:12px;color:#333"><i>施</i><i>工</i><i>合</i><i>同</i><i>签</i><i>订</i></div>
<div class="t c" style="left:1166.8px;top:351.5px;width:100px;font-size:13px;color:#333">2021-12-13</div>
<div class="t c" style="left:1166.8px;top:403.5px;width:100px;font-size:12px;color:#333"><i>项</i><i>目</i><i>准</i><i>备</i></div>
<div class="t c" style="left:1265.8px;top:351.5px;width:100px;font-size:13px;color:#333">2021-12-15</div>
<div class="t c" style="left:1265.8px;top:403.5px;width:100px;font-size:12px;color:#333"><i>现</i><i>场</i><i>执</i><i>行</i></div>
<div class="t c" style="left:1364.8px;top:351.5px;width:100px;font-size:13px;color:#333">2021-12-07</div>
<div class="t c" style="left:1364.8px;top:403.5px;width:100px;font-size:12px;color:#333"><i>项</i><i>目</i><i>验</i><i>收</i></div>
<svg class="a"  style="pointer-events:none;left:0px;top:0px" width="2520" height="1092" viewBox="0 0 2520 1092" ><path d="M537.8 387.8H612.8" stroke="#0a78ff" stroke-width="2"/><g transform="translate(525.8 386.5)"><circle r="9.1" fill="#fff" stroke="#5aa5ff" stroke-width="1.9"/><circle r="7.1" fill="#0a78ff"/><path d="M-3.2 0.2L-1 2.4L3.2 -2" fill="none" stroke="#fff" stroke-width="1.7" stroke-linecap="round" stroke-linejoin="round"/></g><path d="M636.8 387.8H711.8" stroke="#0a78ff" stroke-width="2"/><g transform="translate(624.8 386.5)"><circle r="9.1" fill="#fff" stroke="#5aa5ff" stroke-width="1.9"/><circle r="7.1" fill="#0a78ff"/><path d="M-3.2 0.2L-1 2.4L3.2 -2" fill="none" stroke="#fff" stroke-width="1.7" stroke-linecap="round" stroke-linejoin="round"/></g><path d="M735.8 387.8H810.8" stroke="#0a78ff" stroke-width="2"/><g transform="translate(723.8 386.5)"><circle r="9.1" fill="#fff" stroke="#5aa5ff" stroke-width="1.9"/><circle r="7.1" fill="#0a78ff"/><path d="M-3.2 0.2L-1 2.4L3.2 -2" fill="none" stroke="#fff" stroke-width="1.7" stroke-linecap="round" stroke-linejoin="round"/></g><path d="M834.8 387.8H909.8" stroke="#0a78ff" stroke-width="2"/><g transform="translate(822.8 386.5)"><circle r="9.1" fill="#fff" stroke="#5aa5ff" stroke-width="1.9"/><circle r="7.1" fill="#0a78ff"/><path d="M-3.2 0.2L-1 2.4L3.2 -2" fill="none" stroke="#fff" stroke-width="1.7" stroke-linecap="round" stroke-linejoin="round"/></g><path d="M933.8 387.8H1008.8" stroke="#0a78ff" stroke-width="2"/><g transform="translate(921.8 386.5)"><circle r="9.1" fill="#fff" stroke="#5aa5ff" stroke-width="1.9"/><circle r="7.1" fill="#0a78ff"/><path d="M-3.2 0.2L-1 2.4L3.2 -2" fill="none" stroke="#fff" stroke-width="1.7" stroke-linecap="round" stroke-linejoin="round"/></g><path d="M1032.8 387.8H1107.8" stroke="#0a78ff" stroke-width="2"/><g transform="translate(1020.8 386.5)"><circle r="9.1" fill="#fff" stroke="#5aa5ff" stroke-width="1.9"/><circle r="7.1" fill="#0a78ff"/><path d="M-3.2 0.2L-1 2.4L3.2 -2" fill="none" stroke="#fff" stroke-width="1.7" stroke-linecap="round" stroke-linejoin="round"/></g><path d="M1131.8 387.8H1206.8" stroke="#0a78ff" stroke-width="2"/><g transform="translate(1119.8 386.5)"><circle r="9.1" fill="#fff" stroke="#5aa5ff" stroke-width="1.9"/><circle r="7.1" fill="#0a78ff"/><path d="M-3.2 0.2L-1 2.4L3.2 -2" fill="none" stroke="#fff" stroke-width="1.7" stroke-linecap="round" stroke-linejoin="round"/></g><path d="M1230.8 387.8H1305.8" stroke="#0a78ff" stroke-width="2"/><g transform="translate(1218.8 386.5)"><circle r="9.1" fill="#fff" stroke="#5aa5ff" stroke-width="1.9"/><circle r="7.1" fill="#0a78ff"/><path d="M-3.2 0.2L-1 2.4L3.2 -2" fill="none" stroke="#fff" stroke-width="1.7" stroke-linecap="round" stroke-linejoin="round"/></g><path d="M1329.8 387.8H1404.8" stroke="#52d3a2" stroke-width="2"/><g transform="translate(1317.8 386.5)"><circle r="9.1" fill="#fff" stroke="#8fe2c3" stroke-width="1.9"/><circle r="7.1" fill="#52d3a2"/><path d="M-3.8 -1H0.2V-3L3.8 0L0.2 3V1H-3.8Z" fill="#fff"/></g><g transform="translate(1416.8 386.5)"><circle r="9.1" fill="#fff" stroke="#5aa5ff" stroke-width="1.9"/><circle r="7.1" fill="#0a78ff"/><path d="M-3.2 0.2L-1 2.4L3.2 -2" fill="none" stroke="#fff" stroke-width="1.7" stroke-linecap="round" stroke-linejoin="round"/></g></svg>
<svg class="a" style="left:2051px;top:148px" width="440" height="85" viewBox="0 0 440 85" ><rect width="440" height="85" fill="#0670f1"/>
<path d="M0 0H90V11L76 48L0 22Z" fill="#0c78f6" opacity=".7"/>
<path d="M0 22L76 48L79 85H0Z" fill="#0a73f3" opacity=".6"/>
<path d="M90 11L149 35L162 30V67L139 85H79L76 48Z" fill="#0060de" opacity=".8"/>
<path d="M90 0H149V35L90 11Z" fill="#0872f3" opacity=".6"/>
<path d="M149 0H195V85H139L162 67V30L149 35Z" fill="#0468e8" opacity=".8"/>
<path d="M195 0H300L332 28V85H195Z" fill="#066cee" opacity=".7"/>
<path d="M300 0H372L332 28Z" fill="#0a74f4" opacity=".8"/>
<path d="M372 0H440V85H332V28Z" fill="#0b73f5" opacity=".8"/></svg>
<div class="t c" style="left:2064.5px;top:160px;width:120px;height:40px;line-height:40px;font-size:32px;color:#fff">0</div>
<div class="t c" style="left:2064.5px;top:201px;width:120px;font-size:14px;color:#fff"><i>我</i><i>的</i><i>待</i><i>办</i><i>事</i><i>项</i></div>
<div class="t c" style="left:2211px;top:160px;width:120px;height:40px;line-height:40px;font-size:32px;color:#fff">0</div>
<div class="t c" style="left:2211px;top:201px;width:120px;font-size:14px;color:#fff"><i>紧</i><i>急</i><i>待</i><i>办</i><i>事</i><i>项</i></div>
<div class="t c" style="left:2357.5px;top:160px;width:120px;height:40px;line-height:40px;font-size:32px;color:#fff">0</div>
<div class="t c" style="left:2357.5px;top:201px;width:120px;font-size:14px;color:#fff"><i>今</i><i>日</i><i>参</i><i>会</i><i>事</i><i>项</i></div>
<div class="a" style="left:2197px;top:176px;width:1px;height:30px;background:rgba(255,255,255,.5)"></div>
<div class="a" style="left:2343px;top:176px;width:1px;height:30px;background:rgba(255,255,255,.5)"></div>
<div class="panel" style="left:2051px;top:248px;width:440px;height:195px"></div>
<div class="t b" style="left:2066px;top:269px;font-size:14px;color:#222"><i>公</i><i>告</i></div>
<div class="t r" style="left:2416px;top:267px;width:60px;font-size:12px;color:#187bff"><i>更</i><i>多</i></div>
<div class="a" style="left:2066px;top:317px;width:5px;height:5px;border-radius:3px;background:#2e3244"></div>
<div class="t" style="left:2076px;top:309px;font-size:12px;color:#2e3244"><i>首</i><i>次</i><i>登</i><i>录</i><i>如</i><i>何</i><i>修</i><i>改</i><i>密</i><i>码</i></div>
<div class="t r" style="left:2376px;top:309px;width:100px;font-size:15px;color:#2e3244">2021-12-15</div>
<div class="a" style="left:2066px;top:347px;width:5px;height:5px;border-radius:3px;background:#2e3244"></div>
<div class="t" style="left:2076px;top:339px;font-size:12px;color:#2e3244"><i>第</i><i>一</i><i>次</i><i>登</i><i>录</i><i>系</i><i>统</i><i>注</i><i>意</i><i>事</i><i>项</i><i>（</i><i>重</i><i>点</i><i>显</i><i>示</i><i>关</i><i>注</i><i>项</i><i>目</i><i>）</i></div>
<div class="t r" style="left:2376px;top:339px;width:100px;font-size:15px;color:#2e3244">2021-12-15</div>
<div class="panel" style="left:2051px;top:458px;width:440px;height:410px"></div>
<div class="t b" style="left:2066px;top:474px;font-size:14px;color:#222"><i>项</i><i>目</i><i>展</i><i>览</i></div>
<div class="t r" style="left:2416px;top:472px;width:60px;font-size:12px;color:#187bff"><i>更</i><i>多</i></div>
<div class="a" style="left:2061px;top:518px;width:420px;height:330px;border:1px solid #b9d6e6;background:#fff"></div>
<svg class="a" style="left:2062px;top:519px" width="209" height="328" viewBox="0 0 209 328" ><defs><linearGradient id="sk1" x1="0" y1="0" x2="1" y2="1"><stop offset="0" stop-color="#d3d7e3"/><stop offset=".55" stop-color="#e2e5ee"/><stop offset="1" stop-color="#e6e8ef"/></linearGradient><linearGradient id="b1" x1="0" y1="0" x2="1" y2="0"><stop offset="0" stop-color="#b7b5ae"/><stop offset=".18" stop-color="#c9c7c0"/><stop offset=".82" stop-color="#c7c5be"/><stop offset="1" stop-color="#b3b1aa"/></linearGradient><linearGradient id="b1v" x1="0" y1="0" x2="0" y2="1"><stop offset="0" stop-color="#fff" stop-opacity=".06"/><stop offset="1" stop-color="#000" stop-opacity=".12"/></linearGradient><filter id="bl1" x="-5%" y="-5%" width="110%" height="110%"><feGaussianBlur stdDeviation="0.55"/></filter><clipPath id="c1"><rect width="209" height="328"/></clipPath></defs><g clip-path="url(#c1)"><g filter="url(#bl1)"><rect x="-5" y="-5" width="219" height="338" fill="url(#sk1)"/><path d="M-2 120.5L8 120V250H-2Z" fill="#c6c4bd"/><path d="M186 116L212 115V260H186Z" fill="#c8c6bf"/><rect x="189.5" y="124.0" width="4.2" height="12.5" fill="#78858a"/><rect x="198.5" y="124.0" width="4.6" height="12.5" fill="#78858a"/><rect x="1.2" y="132.0" width="3.4" height="12.0" fill="#808c91"/><rect x="190.4" y="144.6" width="4.2" height="12.5" fill="#78858a"/><rect x="199.5" y="144.6" width="4.6" height="12.5" fill="#78858a"/><rect x="0.9" y="152.6" width="3.4" height="12.0" fill="#808c91"/><rect x="191.3" y="165.2" width="4.2" height="12.5" fill="#78858a"/><rect x="200.5" y="165.2" width="4.6" height="12.5" fill="#78858a"/><rect x="0.6" y="173.2" width="3.4" height="12.0" fill="#808c91"/><rect x="192.2" y="185.8" width="4.2" height="12.5" fill="#78858a"/><rect x="201.5" y="185.8" width="4.6" height="12.5" fill="#78858a"/><rect x="0.3" y="193.8" width="3.4" height="12.0" fill="#808c91"/><rect x="193.1" y="206.4" width="4.2" height="12.5" fill="#78858a"/><rect x="202.5" y="206.4" width="4.6" height="12.5" fill="#78858a"/><rect x="0.0" y="214.4" width="3.4" height="12.0" fill="#808c91"/><rect x="194.0" y="227.0" width="4.2" height="12.5" fill="#78858a"/><rect x="203.5" y="227.0" width="4.6" height="12.5" fill="#78858a"/><rect x="-0.3" y="235.0" width="3.4" height="12.0" fill="#808c91"/><path d="M12 93L29 88.3H166L181.8 89.6L211 290H-4Z" fill="url(#b1)"/><path d="M12 93L29 88.3H166L181.8 89.6L211 290H-4Z" fill="url(#b1v)"/><rect x="25.3" y="83.6" width="14" height="9" rx="2" fill="#8f8f8c"/><rect x="155.7" y="80" width="13.4" height="10" rx="2" fill="#8f8f8c"/><rect x="57.0" y="71.7" width="80.0" height="16.6" fill="#878786"/><rect x="76.4" y="52.2" width="40.2" height="19.6" fill="#8d8d8c"/><rect x="91.5" y="48.6" width="8.0" height="4.0" fill="#858584"/><path d="M95.4 39V50" stroke="#9a9a9a" stroke-width="1"/><circle cx="95.4" cy="38.4" r="1.5" fill="#b0525c"/><rect x="81.5" y="57.5" width="6.0" height="7.5" fill="#b1b8b4"/><rect x="93.2" y="57.5" width="6.0" height="7.5" fill="#b1b8b4"/><rect x="105.0" y="57.5" width="6.0" height="7.5" fill="#b1b8b4"/><rect x="71.5" y="79.0" width="6.0" height="7.5" fill="#b4bab6"/><rect x="85.5" y="79.0" width="6.0" height="7.5" fill="#b4bab6"/><rect x="99.0" y="79.0" width="6.0" height="7.5" fill="#b4bab6"/><rect x="114.0" y="79.0" width="6.0" height="7.5" fill="#b4bab6"/><path d="M95.6 70L98.2 70.4L99 80L96.4 81.5Z" fill="#c23a44"/><path d="M14 97H180" stroke="#dddbd5" stroke-width="2.2" opacity=".8"/><rect x="56.2" y="102.6" width="6.6" height="12.4" fill="#879193"/><rect x="68.9" y="102.6" width="6.6" height="12.4" fill="#879193"/><rect x="81.5" y="102.6" width="6.6" height="12.4" fill="#879193"/><rect x="94.2" y="102.6" width="6.6" height="12.4" fill="#879193"/><rect x="106.8" y="102.6" width="6.6" height="12.4" fill="#879193"/><rect x="119.5" y="102.6" width="6.6" height="12.4" fill="#879193"/><rect x="132.1" y="102.6" width="6.6" height="12.4" fill="#879193" opacity="0.35"/><rect x="55.7" y="122.9" width="6.6" height="13.0" fill="#848f92"/><rect x="68.7" y="122.9" width="6.6" height="13.0" fill="#848f92"/><rect x="81.7" y="122.9" width="6.6" height="13.0" fill="#848f92"/><rect x="94.7" y="122.9" width="6.6" height="13.0" fill="#848f92"/><rect x="107.7" y="122.9" width="6.6" height="13.0" fill="#848f92"/><rect x="120.7" y="122.9" width="6.6" height="13.0" fill="#848f92"/><rect x="133.7" y="122.9" width="6.6" height="13.0" fill="#848f92"/><rect x="54.6" y="144.0" width="6.6" height="14.0" fill="#7f8b90"/><rect x="68.2" y="144.0" width="6.6" height="14.0" fill="#7f8b90"/><rect x="81.7" y="144.0" width="6.6" height="14.0" fill="#7f8b90"/><rect x="95.3" y="144.0" width="6.6" height="14.0" fill="#7f8b90"/><rect x="108.8" y="144.0" width="6.6" height="14.0" fill="#7f8b90"/><rect x="122.4" y="144.0" width="6.6" height="14.0" fill="#7f8b90"/><rect x="135.9" y="144.0" width="6.6" height="14.0" fill="#7f8b90"/><rect x="53.7" y="165.5" width="6.6" height="14.5" fill="#808c91"/><rect x="67.7" y="165.5" width="6.6" height="14.5" fill="#808c91"/><rect x="81.7" y="165.5" width="6.6" height="14.5" fill="#808c91"/><rect x="95.7" y="165.5" width="6.6" height="14.5" fill="#808c91"/><rect x="109.7" y="165.5" width="6.6" height="14.5" fill="#808c91"/><rect x="123.7" y="165.5" width="6.6" height="14.5" fill="#808c91"/><rect x="137.7" y="165.5" width="6.6" height="14.5" fill="#808c91"/><rect x="52.7" y="187.5" width="6.6" height="14.5" fill="#67737b"/><rect x="67.2" y="187.5" width="6.6" height="14.5" fill="#67737b"/><rect x="81.6" y="187.5" width="6.6" height="14.5" fill="#67737b"/><rect x="96.0" y="187.5" width="6.6" height="14.5" fill="#67737b"/><rect x="110.5" y="187.5" width="6.6" height="14.5" fill="#67737b"/><rect x="125.0" y="187.5" width="6.6" height="14.5" fill="#67737b"/><rect x="139.4" y="187.5" width="6.6" height="14.5" fill="#67737b"/><path d="M52.8 99L48.5 208" stroke="#d9d7d1" stroke-width="2.6" opacity=".85"/><path d="M65.5 99L63.0 208" stroke="#d9d7d1" stroke-width="2.6" opacity=".85"/><path d="M78.3 99L77.5 208" stroke="#d9d7d1" stroke-width="2.6" opacity=".85"/><path d="M91.0 99L92.0 208" stroke="#d9d7d1" stroke-width="2.6" opacity=".85"/><path d="M103.8 99L106.5 208" stroke="#d9d7d1" stroke-width="2.6" opacity=".85"/><path d="M116.5 99L121.0 208" stroke="#d9d7d1" stroke-width="2.6" opacity=".85"/><path d="M129.3 99L135.5 208" stroke="#d9d7d1" stroke-width="2.6" opacity=".85"/><path d="M142.1 99L150.0 208" stroke="#d9d7d1" stroke-width="2.6" opacity=".85"/><rect x="70.0" y="183.5" width="5.5" height="4.5" fill="#dfe0dd"/><rect x="84.0" y="183.5" width="5.5" height="4.5" fill="#dfe0dd"/><rect x="98.0" y="183.5" width="5.5" height="4.5" fill="#dfe0dd"/><rect x="112.0" y="183.5" width="5.5" height="4.5" fill="#dfe0dd"/><rect x="35.2" y="100.7" width="10.6" height="6.6" fill="#6b787e"/><rect x="34.4" y="112.0" width="10.6" height="12.8" fill="#6b787e"/><rect x="33.1" y="131.0" width="10.6" height="13.6" fill="#6b787e"/><rect x="31.7" y="151.5" width="10.6" height="13.5" fill="#6b787e"/><rect x="30.3" y="172.5" width="10.6" height="14.0" fill="#535e65"/><rect x="28.9" y="194.0" width="10.6" height="14.5" fill="#535e65"/><rect x="27.4" y="216.0" width="10.6" height="14.5" fill="#535e65"/><rect x="16.2" y="103.4" width="6.6" height="12.6" fill="#707d83"/><rect x="14.7" y="123.0" width="6.6" height="13.7" fill="#707d83"/><rect x="13.1" y="145.0" width="6.6" height="14.6" fill="#707d83"/><rect x="11.5" y="167.0" width="6.6" height="14.5" fill="#707d83"/><rect x="9.9" y="189.0" width="6.6" height="14.5" fill="#58636a"/><rect x="8.4" y="211.0" width="6.6" height="14.0" fill="#58636a"/><rect x="149.3" y="98.0" width="11.2" height="6.0" fill="#66737a"/><rect x="150.3" y="109.0" width="11.2" height="12.6" fill="#66737a"/><rect x="151.9" y="128.0" width="11.2" height="13.4" fill="#66737a"/><rect x="153.7" y="148.0" width="11.2" height="13.6" fill="#66737a"/><rect x="155.5" y="169.0" width="11.2" height="14.0" fill="#4d585f"/><rect x="157.4" y="191.0" width="11.2" height="14.5" fill="#4d585f"/><rect x="159.5" y="214.0" width="11.2" height="14.5" fill="#4d585f"/><rect x="171.0" y="97.0" width="6.8" height="14.3" fill="#6d7a80"/><rect x="173.6" y="119.0" width="6.8" height="13.7" fill="#6d7a80"/><rect x="176.1" y="140.6" width="6.8" height="14.3" fill="#6d7a80"/><rect x="178.7" y="162.8" width="6.8" height="14.4" fill="#6d7a80"/><rect x="181.3" y="185.0" width="6.8" height="14.6" fill="#545f66"/><rect x="183.9" y="207.0" width="6.8" height="14.6" fill="#545f66"/><path d="M30 96L20 288M47 96L43 210M147 96L152 210M165 94L183 288" stroke="#aeaca6" stroke-width="1.4" opacity=".6"/><rect x="46.2" y="207.7" width="109.0" height="17.2" fill="#9c9a95"/><rect x="46.2" y="207.7" width="109.0" height="2.2" fill="#85837e"/><path d="M62 217.8H142" stroke="#a58a4c" stroke-width="3.2" stroke-dasharray="4 11.4" opacity=".9"/><rect x="50.0" y="224.8" width="102.0" height="28.0" fill="#45484a"/><rect x="50.0" y="252.8" width="102.0" height="7.8" fill="#8f8d88"/><rect x="50.0" y="260.6" width="102.0" height="27.0" fill="#6a6966"/><rect x="75.2" y="261.0" width="10.4" height="26.5" fill="#2a2c2e"/><rect x="75.8" y="234.0" width="9.6" height="17.0" fill="#33373a"/><rect x="95.4" y="261.0" width="10.4" height="26.5" fill="#2a2c2e"/><rect x="96.0" y="234.0" width="9.6" height="17.0" fill="#33373a"/><rect x="116.0" y="261.0" width="10.4" height="26.5" fill="#2a2c2e"/><rect x="116.6" y="234.0" width="9.6" height="17.0" fill="#33373a"/><rect x="59.5" y="264.5" width="6.2" height="16.5" fill="#3a3d40"/><rect x="137.4" y="262.0" width="6.6" height="16.5" fill="#3a3d40"/><rect x="59.0" y="236.0" width="6.5" height="15.0" fill="#3a3e41"/><rect x="137.0" y="235.0" width="6.5" height="15.0" fill="#3a3e41"/><rect x="51.9" y="230.0" width="4.8" height="57.0" fill="#a9a7a1"/><rect x="145.8" y="230.0" width="4.8" height="57.0" fill="#a9a7a1"/><rect x="44.9" y="228.0" width="7.4" height="59.0" fill="#c9c7c1"/><rect x="44.0" y="224.8" width="9.2" height="5.0" fill="#d7d5cf"/><rect x="44.0" y="283.5" width="9.2" height="4.0" fill="#bdbbb5"/><rect x="66.2" y="228.0" width="7.4" height="59.0" fill="#c9c7c1"/><rect x="65.3" y="224.8" width="9.2" height="5.0" fill="#d7d5cf"/><rect x="65.3" y="283.5" width="9.2" height="4.0" fill="#bdbbb5"/><rect x="87.4" y="228.0" width="7.4" height="59.0" fill="#c9c7c1"/><rect x="86.5" y="224.8" width="9.2" height="5.0" fill="#d7d5cf"/><rect x="86.5" y="283.5" width="9.2" height="4.0" fill="#bdbbb5"/><rect x="107.9" y="228.0" width="7.4" height="59.0" fill="#c9c7c1"/><rect x="107.0" y="224.8" width="9.2" height="5.0" fill="#d7d5cf"/><rect x="107.0" y="283.5" width="9.2" height="4.0" fill="#bdbbb5"/><rect x="129.4" y="228.0" width="7.4" height="59.0" fill="#c9c7c1"/><rect x="128.5" y="224.8" width="9.2" height="5.0" fill="#d7d5cf"/><rect x="128.5" y="283.5" width="9.2" height="4.0" fill="#bdbbb5"/><rect x="149.9" y="228.0" width="7.4" height="59.0" fill="#c9c7c1"/><rect x="149.0" y="224.8" width="9.2" height="5.0" fill="#d7d5cf"/><rect x="149.0" y="283.5" width="9.2" height="4.0" fill="#bdbbb5"/><path d="M-3 226C6 228 12 236 22 237C34 238 42 240 45 250V288H-3Z" fill="#485b45"/><path d="M-3 250C10 246 30 252 40 262V288H-3Z" fill="#394a39"/><path d="M157 240C160 230 172 224 181 222C190 220 200 226 206 232L212 240V288H157Z" fill="#55684a"/><path d="M160 262C172 254 196 256 212 266V288H160Z" fill="#43543c"/><path d="M21 255V284" stroke="#e2e0da" stroke-width="1.8"/><path d="M16.5 258.5H25.5" stroke="#efeee9" stroke-width="2.2"/><path d="M16.5 288L21 281L25.5 288Z" fill="#cfcdc7"/><path d="M183.5 249.5V278" stroke="#e2e0da" stroke-width="1.8"/><path d="M178.5 253H188.5" stroke="#efeee9" stroke-width="2.2"/><path d="M178 285L183.5 277L189.5 285Z" fill="#cfcdc7"/><rect x="-3.0" y="287.0" width="215.0" height="45.0" fill="#55534e"/><path d="M160 285.5H212" stroke="#c9c7c1" stroke-width="3"/><path d="M10 298L60 294.5H150L196 293" stroke="#9a8432" stroke-width="1" fill="none" opacity=".7"/></g><rect x="0" y="287.8" width="209" height="40.2" fill="#141414" opacity=".66"/></g></svg>
<svg class="a" style="left:2271px;top:519px" width="210" height="328" viewBox="0 0 210 328" ><defs><radialGradient id="sk2" cx="60%" cy="22%" r="75%"><stop offset="0" stop-color="#edeced"/><stop offset=".45" stop-color="#dddbdc"/><stop offset="1" stop-color="#b5b4b7"/></radialGradient><linearGradient id="b2" x1="0" y1="0" x2="0" y2="1"><stop offset="0" stop-color="#c6c0b4"/><stop offset="1" stop-color="#cfc7b8"/></linearGradient><linearGradient id="lawn" x1="0" y1="0" x2="0" y2="1"><stop offset="0" stop-color="#5a9a30"/><stop offset="1" stop-color="#478224"/></linearGradient><linearGradient id="hz2" x1="0" y1="0" x2="0" y2="1"><stop offset="0" stop-color="#d6d6d9" stop-opacity=".22"/><stop offset=".6" stop-color="#d6d6d9" stop-opacity=".14"/><stop offset="1" stop-color="#d6d6d9" stop-opacity="0"/></linearGradient><filter id="bl2" x="-5%" y="-5%" width="110%" height="110%"><feGaussianBlur stdDeviation="0.6"/></filter><clipPath id="c2"><rect width="210" height="328"/></clipPath></defs><g clip-path="url(#c2)"><g filter="url(#bl2)"><rect x="-5" y="-5" width="220" height="338" fill="url(#sk2)"/><rect x="-3.0" y="99.4" width="24.0" height="150.0" fill="#c2bcaf"/><rect x="171.0" y="97.5" width="42.0" height="150.0" fill="#c6c0b3"/><rect x="20.5" y="74.9" width="150.5" height="170.0" fill="url(#b2)"/><rect x="60.0" y="53.5" width="72.0" height="21.4" fill="#9b9b9f"/><rect x="77.8" y="31.6" width="36.8" height="22.0" fill="#a1a1a5"/><rect x="92.0" y="27.3" width="7.7" height="5.0" fill="#8d8d91"/><path d="M95.6 14V28" stroke="#77777b" stroke-width="1.1"/><circle cx="95.6" cy="14.3" r="1.4" fill="#77777b"/><rect x="32.2" y="66" width="12.7" height="9" rx="2" fill="#9c9c9f"/><rect x="146.8" y="64.6" width="12.6" height="10.4" rx="2" fill="#9c9c9f"/><rect x="83.0" y="37.5" width="4.6" height="8.5" fill="#8e939c"/><rect x="93.5" y="37.5" width="4.6" height="8.5" fill="#8e939c"/><rect x="104.0" y="37.5" width="4.6" height="8.5" fill="#8e939c"/><rect x="68.0" y="60.0" width="4.6" height="9.5" fill="#8b9099"/><rect x="79.0" y="60.0" width="4.6" height="9.5" fill="#8b9099"/><rect x="90.0" y="60.0" width="4.6" height="9.5" fill="#8b9099"/><rect x="101.0" y="60.0" width="4.6" height="9.5" fill="#8b9099"/><rect x="112.0" y="60.0" width="4.6" height="9.5" fill="#8b9099"/><rect x="122.0" y="60.0" width="4.6" height="9.5" fill="#8b9099"/><rect x="25.0" y="83.6" width="5.8" height="12.6" fill="#8696a4" opacity="1"/><rect x="37.2" y="83.6" width="5.8" height="12.6" fill="#8696a4" opacity="1"/><rect x="48.8" y="83.6" width="5.8" height="12.6" fill="#8696a4" opacity="1"/><rect x="60.0" y="83.6" width="5.8" height="12.6" fill="#8696a4" opacity="1"/><rect x="71.8" y="83.6" width="5.8" height="12.6" fill="#8696a4" opacity="1"/><rect x="83.2" y="83.6" width="5.8" height="12.6" fill="#8696a4" opacity="1"/><rect x="94.3" y="83.6" width="5.8" height="12.6" fill="#8696a4" opacity="1"/><rect x="105.5" y="83.6" width="5.8" height="12.6" fill="#8696a4" opacity="1"/><rect x="116.4" y="83.6" width="5.8" height="12.6" fill="#8696a4" opacity="0.45"/><rect x="127.5" y="83.6" width="5.8" height="12.6" fill="#8696a4" opacity="0.45"/><rect x="138.6" y="83.6" width="5.8" height="12.6" fill="#8696a4" opacity="0.45"/><rect x="150.0" y="83.6" width="5.8" height="12.6" fill="#8696a4" opacity="0.45"/><rect x="161.8" y="83.6" width="5.8" height="12.6" fill="#8696a4" opacity="1"/><rect x="25.0" y="103.1" width="5.8" height="12.6" fill="#8696a4" opacity="1"/><rect x="37.2" y="103.1" width="5.8" height="12.6" fill="#8696a4" opacity="1"/><rect x="48.8" y="103.1" width="5.8" height="12.6" fill="#8696a4" opacity="1"/><rect x="60.0" y="103.1" width="5.8" height="12.6" fill="#8696a4" opacity="1"/><rect x="71.8" y="103.1" width="5.8" height="12.6" fill="#8696a4" opacity="1"/><rect x="83.2" y="103.1" width="5.8" height="12.6" fill="#8696a4" opacity="1"/><rect x="94.3" y="103.1" width="5.8" height="12.6" fill="#8696a4" opacity="1"/><rect x="105.5" y="103.1" width="5.8" height="12.6" fill="#8696a4" opacity="1"/><rect x="116.4" y="103.1" width="5.8" height="12.6" fill="#8696a4" opacity="1"/><rect x="127.5" y="103.1" width="5.8" height="12.6" fill="#8696a4" opacity="1"/><rect x="138.6" y="103.1" width="5.8" height="12.6" fill="#8696a4" opacity="1"/><rect x="150.0" y="103.1" width="5.8" height="12.6" fill="#8696a4" opacity="1"/><rect x="161.8" y="103.1" width="5.8" height="12.6" fill="#8696a4" opacity="1"/><rect x="25.0" y="122.7" width="5.8" height="12.6" fill="#8696a4" opacity="1"/><rect x="37.2" y="122.7" width="5.8" height="12.6" fill="#8696a4" opacity="1"/><rect x="48.8" y="122.7" width="5.8" height="12.6" fill="#8696a4" opacity="1"/><rect x="60.0" y="122.7" width="5.8" height="12.6" fill="#8696a4" opacity="1"/><rect x="71.8" y="122.7" width="5.8" height="12.6" fill="#8696a4" opacity="1"/><rect x="83.2" y="122.7" width="5.8" height="12.6" fill="#8696a4" opacity="1"/><rect x="94.3" y="122.7" width="5.8" height="12.6" fill="#8696a4" opacity="1"/><rect x="105.5" y="122.7" width="5.8" height="12.6" fill="#8696a4" opacity="1"/><rect x="116.4" y="122.7" width="5.8" height="12.6" fill="#8696a4" opacity="1"/><rect x="127.5" y="122.7" width="5.8" height="12.6" fill="#8696a4" opacity="1"/><rect x="138.6" y="122.7" width="5.8" height="12.6" fill="#8696a4" opacity="1"/><rect x="150.0" y="122.7" width="5.8" height="12.6" fill="#8696a4" opacity="1"/><rect x="161.8" y="122.7" width="5.8" height="12.6" fill="#8696a4" opacity="1"/><rect x="25.0" y="142.2" width="5.8" height="12.6" fill="#8696a4" opacity="1"/><rect x="37.2" y="142.2" width="5.8" height="12.6" fill="#8696a4" opacity="1"/><rect x="48.8" y="142.2" width="5.8" height="12.6" fill="#8696a4" opacity="1"/><rect x="60.0" y="142.2" width="5.8" height="12.6" fill="#8696a4" opacity="1"/><rect x="71.8" y="142.2" width="5.8" height="12.6" fill="#8696a4" opacity="1"/><rect x="83.2" y="142.2" width="5.8" height="12.6" fill="#8696a4" opacity="1"/><rect x="94.3" y="142.2" width="5.8" height="12.6" fill="#8696a4" opacity="1"/><rect x="105.5" y="142.2" width="5.8" height="12.6" fill="#8696a4" opacity="1"/><rect x="116.4" y="142.2" width="5.8" height="12.6" fill="#8696a4" opacity="1"/><rect x="127.5" y="142.2" width="5.8" height="12.6" fill="#8696a4" opacity="1"/><rect x="138.6" y="142.2" width="5.8" height="12.6" fill="#8696a4" opacity="1"/><rect x="150.0" y="142.2" width="5.8" height="12.6" fill="#8696a4" opacity="1"/><rect x="161.8" y="142.2" width="5.8" height="12.6" fill="#8696a4" opacity="1"/><rect x="25.0" y="161.8" width="5.8" height="12.6" fill="#8696a4" opacity="1"/><rect x="37.2" y="161.8" width="5.8" height="12.6" fill="#8696a4" opacity="1"/><rect x="48.8" y="161.8" width="5.8" height="12.6" fill="#8696a4" opacity="1"/><rect x="60.0" y="161.8" width="5.8" height="12.6" fill="#8696a4" opacity="1"/><rect x="71.8" y="161.8" width="5.8" height="12.6" fill="#8696a4" opacity="1"/><rect x="83.2" y="161.8" width="5.8" height="12.6" fill="#8696a4" opacity="1"/><rect x="94.3" y="161.8" width="5.8" height="12.6" fill="#8696a4" opacity="1"/><rect x="105.5" y="161.8" width="5.8" height="12.6" fill="#8696a4" opacity="1"/><rect x="116.4" y="161.8" width="5.8" height="12.6" fill="#8696a4" opacity="1"/><rect x="127.5" y="161.8" width="5.8" height="12.6" fill="#8696a4" opacity="1"/><rect x="138.6" y="161.8" width="5.8" height="12.6" fill="#8696a4" opacity="1"/><rect x="150.0" y="161.8" width="5.8" height="12.6" fill="#8696a4" opacity="1"/><rect x="161.8" y="161.8" width="5.8" height="12.6" fill="#8696a4" opacity="1"/><rect x="25.0" y="181.3" width="5.8" height="12.6" fill="#8696a4" opacity="1"/><rect x="37.2" y="181.3" width="5.8" height="12.6" fill="#8696a4" opacity="1"/><rect x="48.8" y="181.3" width="5.8" height="12.6" fill="#8696a4" opacity="1"/><rect x="60.0" y="181.3" width="5.8" height="12.6" fill="#8696a4" opacity="1"/><rect x="71.8" y="181.3" width="5.8" height="12.6" fill="#8696a4" opacity="1"/><rect x="83.2" y="181.3" width="5.8" height="12.6" fill="#8696a4" opacity="1"/><rect x="94.3" y="181.3" width="5.8" height="12.6" fill="#8696a4" opacity="1"/><rect x="105.5" y="181.3" width="5.8" height="12.6" fill="#8696a4" opacity="1"/><rect x="116.4" y="181.3" width="5.8" height="12.6" fill="#8696a4" opacity="1"/><rect x="127.5" y="181.3" width="5.8" height="12.6" fill="#8696a4" opacity="1"/><rect x="138.6" y="181.3" width="5.8" height="12.6" fill="#8696a4" opacity="1"/><rect x="150.0" y="181.3" width="5.8" height="12.6" fill="#8696a4" opacity="1"/><rect x="161.8" y="181.3" width="5.8" height="12.6" fill="#8696a4" opacity="1"/><rect x="25.0" y="200.9" width="5.8" height="12.6" fill="#8696a4" opacity="1"/><rect x="37.2" y="200.9" width="5.8" height="12.6" fill="#8696a4" opacity="1"/><rect x="48.8" y="200.9" width="5.8" height="12.6" fill="#8696a4" opacity="1"/><rect x="60.0" y="200.9" width="5.8" height="12.6" fill="#8696a4" opacity="1"/><rect x="71.8" y="200.9" width="5.8" height="12.6" fill="#8696a4" opacity="1"/><rect x="83.2" y="200.9" width="5.8" height="12.6" fill="#8696a4" opacity="1"/><rect x="94.3" y="200.9" width="5.8" height="12.6" fill="#8696a4" opacity="1"/><rect x="105.5" y="200.9" width="5.8" height="12.6" fill="#8696a4" opacity="1"/><rect x="116.4" y="200.9" width="5.8" height="12.6" fill="#8696a4" opacity="1"/><rect x="127.5" y="200.9" width="5.8" height="12.6" fill="#8696a4" opacity="1"/><rect x="138.6" y="200.9" width="5.8" height="12.6" fill="#8696a4" opacity="1"/><rect x="150.0" y="200.9" width="5.8" height="12.6" fill="#8696a4" opacity="1"/><rect x="161.8" y="200.9" width="5.8" height="12.6" fill="#8696a4" opacity="1"/><rect x="25.0" y="220.4" width="5.8" height="12.6" fill="#8696a4" opacity="1"/><rect x="37.2" y="220.4" width="5.8" height="12.6" fill="#8696a4" opacity="1"/><rect x="48.8" y="220.4" width="5.8" height="12.6" fill="#8696a4" opacity="1"/><rect x="60.0" y="220.4" width="5.8" height="12.6" fill="#8696a4" opacity="1"/><rect x="71.8" y="220.4" width="5.8" height="12.6" fill="#8696a4" opacity="1"/><rect x="83.2" y="220.4" width="5.8" height="12.6" fill="#8696a4" opacity="1"/><rect x="94.3" y="220.4" width="5.8" height="12.6" fill="#8696a4" opacity="1"/><rect x="105.5" y="220.4" width="5.8" height="12.6" fill="#8696a4" opacity="1"/><rect x="116.4" y="220.4" width="5.8" height="12.6" fill="#8696a4" opacity="1"/><rect x="127.5" y="220.4" width="5.8" height="12.6" fill="#8696a4" opacity="1"/><rect x="138.6" y="220.4" width="5.8" height="12.6" fill="#8696a4" opacity="1"/><rect x="150.0" y="220.4" width="5.8" height="12.6" fill="#8696a4" opacity="1"/><rect x="161.8" y="220.4" width="5.8" height="12.6" fill="#8696a4" opacity="1"/><path d="M24 98.5H168" stroke="#b3ac9f" stroke-width="1" stroke-dasharray="5 6.4" opacity=".6"/><path d="M24 118.0H168" stroke="#b3ac9f" stroke-width="1" stroke-dasharray="5 6.4" opacity=".6"/><path d="M24 137.6H168" stroke="#b3ac9f" stroke-width="1" stroke-dasharray="5 6.4" opacity=".6"/><path d="M24 157.2H168" stroke="#b3ac9f" stroke-width="1" stroke-dasharray="5 6.4" opacity=".6"/><path d="M24 176.7H168" stroke="#b3ac9f" stroke-width="1" stroke-dasharray="5 6.4" opacity=".6"/><path d="M24 196.2H168" stroke="#b3ac9f" stroke-width="1" stroke-dasharray="5 6.4" opacity=".6"/><path d="M24 215.8H168" stroke="#b3ac9f" stroke-width="1" stroke-dasharray="5 6.4" opacity=".6"/><rect x="5.6" y="109.0" width="4.4" height="11.6" fill="#8595a3"/><rect x="13.8" y="109.0" width="4.4" height="11.6" fill="#8595a3"/><rect x="174.7" y="105.8" width="4.4" height="11.6" fill="#8595a3"/><rect x="183.1" y="105.8" width="4.4" height="11.6" fill="#8595a3"/><rect x="191.8" y="105.8" width="4.4" height="11.6" fill="#8595a3"/><rect x="202.4" y="105.8" width="4.4" height="11.6" fill="#8595a3"/><rect x="5.6" y="127.6" width="4.4" height="11.6" fill="#8595a3"/><rect x="13.8" y="127.6" width="4.4" height="11.6" fill="#8595a3"/><rect x="174.7" y="124.2" width="4.4" height="11.6" fill="#8595a3"/><rect x="183.1" y="124.2" width="4.4" height="11.6" fill="#8595a3"/><rect x="191.8" y="124.2" width="4.4" height="11.6" fill="#8595a3"/><rect x="202.4" y="124.2" width="4.4" height="11.6" fill="#8595a3"/><rect x="5.6" y="146.2" width="4.4" height="11.6" fill="#8595a3"/><rect x="13.8" y="146.2" width="4.4" height="11.6" fill="#8595a3"/><rect x="174.7" y="142.6" width="4.4" height="11.6" fill="#8595a3"/><rect x="183.1" y="142.6" width="4.4" height="11.6" fill="#8595a3"/><rect x="191.8" y="142.6" width="4.4" height="11.6" fill="#8595a3"/><rect x="202.4" y="142.6" width="4.4" height="11.6" fill="#8595a3"/><rect x="5.6" y="164.8" width="4.4" height="11.6" fill="#8595a3"/><rect x="13.8" y="164.8" width="4.4" height="11.6" fill="#8595a3"/><rect x="174.7" y="161.0" width="4.4" height="11.6" fill="#8595a3"/><rect x="183.1" y="161.0" width="4.4" height="11.6" fill="#8595a3"/><rect x="191.8" y="161.0" width="4.4" height="11.6" fill="#8595a3"/><rect x="202.4" y="161.0" width="4.4" height="11.6" fill="#8595a3"/><rect x="5.6" y="183.4" width="4.4" height="11.6" fill="#8595a3"/><rect x="13.8" y="183.4" width="4.4" height="11.6" fill="#8595a3"/><rect x="174.7" y="179.4" width="4.4" height="11.6" fill="#8595a3"/><rect x="183.1" y="179.4" width="4.4" height="11.6" fill="#8595a3"/><rect x="191.8" y="179.4" width="4.4" height="11.6" fill="#8595a3"/><rect x="202.4" y="179.4" width="4.4" height="11.6" fill="#8595a3"/><rect x="5.6" y="202.0" width="4.4" height="11.6" fill="#8595a3"/><rect x="13.8" y="202.0" width="4.4" height="11.6" fill="#8595a3"/><rect x="174.7" y="197.8" width="4.4" height="11.6" fill="#8595a3"/><rect x="183.1" y="197.8" width="4.4" height="11.6" fill="#8595a3"/><rect x="191.8" y="197.8" width="4.4" height="11.6" fill="#8595a3"/><rect x="202.4" y="197.8" width="4.4" height="11.6" fill="#8595a3"/><rect x="5.6" y="220.6" width="4.4" height="11.6" fill="#8595a3"/><rect x="13.8" y="220.6" width="4.4" height="11.6" fill="#8595a3"/><rect x="174.7" y="216.2" width="4.4" height="11.6" fill="#8595a3"/><rect x="183.1" y="216.2" width="4.4" height="11.6" fill="#8595a3"/><rect x="191.8" y="216.2" width="4.4" height="11.6" fill="#8595a3"/><rect x="202.4" y="216.2" width="4.4" height="11.6" fill="#8595a3"/><path d="M68.5 78V236M124.5 78V236" stroke="#a8a194" stroke-width="1.8" opacity=".9"/><path d="M22.5 78V240M169.5 78V240" stroke="#b1aa9d" stroke-width="1.6" opacity=".9"/><rect x="77.2" y="210.8" width="42.8" height="25.0" fill="#b3ab9e"/><rect x="76.0" y="209.5" width="45.0" height="3.4" fill="#c4bcaf"/><rect x="81.9" y="217.9" width="8.0" height="17.6" fill="#4b3430"/><rect x="95.1" y="217.9" width="8.0" height="17.6" fill="#4b3430"/><rect x="107.9" y="217.9" width="8.0" height="17.6" fill="#4b3430"/><rect x="-5" y="-5" width="220" height="250" fill="url(#hz2)"/><path d="M-3 -3H21C24 8 31 14 29 22C36 30 34 36 35 38C30 44 32 52 26 58C28 68 20 74 18 84C14 92 10 96 8 104L-3 108Z" fill="#1f2927"/><path d="M181 -3H213V122C206 116 204 104 198 94C196 80 192 66 190 54C186 40 188 28 184 16Z" fill="#2a3330"/><path d="M35.8 123.0 L41.5 141.8 L39.9 142.3 L45.8 160.7 L43.0 161.2 L49.6 179.5 L45.7 180.0 L53.2 198.3 L48.3 198.8 L56.5 217.2 L50.7 217.7 L59.8 236.0 L53.1 236.5 L52.6 236.0 L19.0 236.0 L18.5 236.5 L11.8 236.0 L20.9 217.7 L15.1 217.2 L23.3 198.8 L18.4 198.3 L25.9 180.0 L22.0 179.5 L28.6 161.2 L25.8 160.7 L31.7 142.3 L30.1 141.8Z" fill="#33452f"/><path d="M14 200C14 170 24 140 35.8 132C48 140 58 170 58 200V240H14Z" fill="#2f412d"/><path d="M51.0 155.0 L53.1 183.3 L52.5 183.8 L54.6 211.7 L53.6 212.2 L56.0 240.0 L54.6 240.5 L54.5 240.0 L47.5 240.0 L47.4 240.5 L46.0 240.0 L48.4 212.2 L47.4 211.7 L49.5 183.8 L48.9 183.3Z" fill="#2a3b2a"/><path d="M-3 196C6 184 20 180 34 190C46 186 58 196 64 206C74 204 79 214 79 226V250H-3Z" fill="#2e3f2c"/><path d="M127.0 147.0 L129.7 178.0 L128.9 178.5 L131.7 209.0 L130.4 209.5 L133.5 240.0 L131.7 240.5 L131.6 240.0 L122.5 240.0 L122.3 240.5 L120.5 240.0 L123.6 209.5 L122.3 209.0 L125.1 178.5 L124.3 178.0Z" fill="#2b3c2c"/><path d="M141.0 160.0 L145.0 180.0 L143.9 180.5 L147.9 200.0 L146.0 200.5 L150.5 220.0 L147.9 220.5 L153.0 240.0 L149.6 240.5 L149.4 240.0 L132.6 240.0 L132.4 240.5 L129.0 240.0 L134.1 220.5 L131.5 220.0 L136.0 200.5 L134.1 200.0 L138.1 180.5 L137.0 180.0Z" fill="#2f412e"/><path d="M157.0 150.0 L160.9 168.0 L159.8 168.5 L163.7 186.0 L161.8 186.5 L166.3 204.0 L163.7 204.5 L168.7 222.0 L165.4 222.5 L171.0 240.0 L167.1 240.5 L166.8 240.0 L147.2 240.0 L146.9 240.5 L143.0 240.0 L148.6 222.5 L145.3 222.0 L150.3 204.5 L147.7 204.0 L152.2 186.5 L150.3 186.0 L154.2 168.5 L153.1 168.0Z" fill="#2c3e2c"/><path d="M174.5 144.0 L178.9 163.2 L177.7 163.7 L182.2 182.4 L180.0 182.9 L185.1 201.6 L182.2 202.1 L187.9 220.8 L184.1 221.3 L190.5 240.0 L186.0 240.5 L185.7 240.0 L163.3 240.0 L163.0 240.5 L158.5 240.0 L164.9 221.3 L161.1 220.8 L166.8 202.1 L163.9 201.6 L169.0 182.9 L166.8 182.4 L171.3 163.7 L170.1 163.2Z" fill="#314330"/><path d="M199.0 136.0 L203.7 156.8 L202.4 157.3 L207.2 177.6 L204.9 178.1 L210.3 198.4 L207.1 198.9 L213.2 219.2 L209.2 219.7 L216.0 240.0 L211.2 240.5 L210.9 240.0 L187.1 240.0 L186.8 240.5 L182.0 240.0 L188.8 219.7 L184.8 219.2 L190.9 198.9 L187.7 198.4 L193.1 178.1 L190.8 177.6 L195.6 157.3 L194.3 156.8Z" fill="#2d3f2d"/><path d="M119 204C124 186 134 172 146 172C156 164 168 160 178 164C190 156 204 156 213 160V246H119Z" fill="#2d3f2c"/><ellipse cx="60.9" cy="229.5" rx="9.7" ry="10" fill="#3c5a34"/><ellipse cx="133.8" cy="227.4" rx="11" ry="12.2" fill="#3f5f36"/><ellipse cx="191" cy="226.6" rx="9.6" ry="10.4" fill="#3b5833"/><path d="M-3 238L80 236H118L213 232V246L118 244L80 246L-3 252Z" fill="#34432b"/><path d="M-3 249.5L80 244.2L-3 322Z" fill="url(#lawn)"/><path d="M115.4 241.6L213 237.5V333H196Z" fill="url(#lawn)"/><path d="M80 244.2L86.6 236.5L-3 321.5V316Z" fill="#5a5a40"/><path d="M111.5 236.5L116.5 241.6L206 333H192Z" fill="#4a4a34"/><path d="M86.6 236.5H111.5L187.8 328L195 333H-3V321Z" fill="#cbc3b8"/><rect x="86.8" y="238.0" width="3.5" height="2.6" fill="#d9d2c8" opacity="0.8"/><rect x="97.2" y="238.0" width="3.5" height="2.6" fill="#c0b5a9" opacity="0.8"/><rect x="104.2" y="238.0" width="3.5" height="2.6" fill="#d9d2c8" opacity="0.8"/><rect x="107.7" y="238.0" width="3.5" height="2.6" fill="#d9d2c8" opacity="0.8"/><rect x="88.5" y="240.6" width="4.1" height="3.0" fill="#8c8077" opacity="0.8"/><rect x="92.6" y="240.6" width="4.1" height="3.0" fill="#d9d2c8" opacity="0.8"/><rect x="104.9" y="240.6" width="4.1" height="3.0" fill="#9d9186" opacity="0.8"/><rect x="91.3" y="243.6" width="4.8" height="3.6" fill="#a3958a" opacity="0.8"/><rect x="100.9" y="243.6" width="4.8" height="3.6" fill="#a3958a" opacity="0.8"/><rect x="105.7" y="243.6" width="4.8" height="3.6" fill="#b8aca0" opacity="0.8"/><rect x="84.2" y="247.2" width="5.6" height="4.2" fill="#d9d2c8" opacity="0.8"/><rect x="106.7" y="247.2" width="5.6" height="4.2" fill="#7d736b" opacity="0.8"/><rect x="112.3" y="247.2" width="5.6" height="4.2" fill="#7d736b" opacity="0.8"/><rect x="74.9" y="251.4" width="6.6" height="4.9" fill="#d9d2c8" opacity="0.8"/><rect x="101.2" y="251.4" width="6.6" height="4.9" fill="#b8aca0" opacity="0.8"/><rect x="114.4" y="251.4" width="6.6" height="4.9" fill="#d9d2c8" opacity="0.8"/><rect x="78.3" y="256.2" width="7.7" height="5.7" fill="#c0b5a9" opacity="0.8"/><rect x="86.0" y="256.2" width="7.7" height="5.7" fill="#a3958a" opacity="0.8"/><rect x="109.1" y="256.2" width="7.7" height="5.7" fill="#b8aca0" opacity="0.8"/><rect x="65.5" y="261.9" width="9.0" height="6.7" fill="#9d9186" opacity="0.8"/><rect x="83.5" y="261.9" width="9.0" height="6.7" fill="#a3958a" opacity="0.8"/><rect x="101.6" y="261.9" width="9.0" height="6.7" fill="#7d736b" opacity="0.8"/><rect x="110.6" y="261.9" width="9.0" height="6.7" fill="#a3958a" opacity="0.8"/><rect x="119.7" y="261.9" width="9.0" height="6.7" fill="#a3958a" opacity="0.8"/><rect x="80.7" y="268.6" width="10.6" height="7.8" fill="#b8aca0" opacity="0.8"/><rect x="101.8" y="268.6" width="10.6" height="7.8" fill="#9d9186" opacity="0.8"/><rect x="123.0" y="268.6" width="10.6" height="7.8" fill="#d9d2c8" opacity="0.8"/><rect x="52.6" y="276.4" width="12.4" height="9.1" fill="#d9d2c8" opacity="0.8"/><rect x="65.0" y="276.4" width="12.4" height="9.1" fill="#7d736b" opacity="0.8"/><rect x="89.7" y="276.4" width="12.4" height="9.1" fill="#9d9186" opacity="0.8"/><rect x="102.1" y="276.4" width="12.4" height="9.1" fill="#9d9186" opacity="0.8"/><rect x="126.9" y="276.4" width="12.4" height="9.1" fill="#c0b5a9" opacity="0.8"/><rect x="73.5" y="285.5" width="14.5" height="10.7" fill="#a3958a" opacity="0.8"/><rect x="88.0" y="285.5" width="14.5" height="10.7" fill="#9d9186" opacity="0.8"/><rect x="35.0" y="296.2" width="17.0" height="12.5" fill="#b8aca0" opacity="0.8"/><rect x="52.0" y="296.2" width="17.0" height="12.5" fill="#8c8077" opacity="0.8"/><rect x="68.9" y="296.2" width="17.0" height="12.5" fill="#d9d2c8" opacity="0.8"/><rect x="85.9" y="296.2" width="17.0" height="12.5" fill="#8c8077" opacity="0.8"/><rect x="102.8" y="296.2" width="17.0" height="12.5" fill="#a3958a" opacity="0.8"/><rect x="119.8" y="296.2" width="17.0" height="12.5" fill="#d9d2c8" opacity="0.8"/><rect x="23.9" y="308.7" width="19.9" height="14.6" fill="#8c8077" opacity="0.8"/><rect x="43.8" y="308.7" width="19.9" height="14.6" fill="#9d9186" opacity="0.8"/><rect x="63.6" y="308.7" width="19.9" height="14.6" fill="#d9d2c8" opacity="0.8"/><rect x="83.5" y="308.7" width="19.9" height="14.6" fill="#d9d2c8" opacity="0.8"/><rect x="103.3" y="308.7" width="19.9" height="14.6" fill="#9d9186" opacity="0.8"/><rect x="123.2" y="308.7" width="19.9" height="14.6" fill="#b8aca0" opacity="0.8"/><rect x="143.0" y="308.7" width="19.9" height="14.6" fill="#b8aca0" opacity="0.8"/><rect x="34.1" y="323.3" width="23.2" height="17.1" fill="#b8aca0" opacity="0.8"/><rect x="57.4" y="323.3" width="23.2" height="17.1" fill="#7d736b" opacity="0.8"/><rect x="103.8" y="323.3" width="23.2" height="17.1" fill="#9d9186" opacity="0.8"/><path d="M86.6 236.5L-3 321V328L89 237Z" fill="#9c958a" opacity=".85"/><path d="M111.5 236.5L187.8 328H178L109.6 237Z" fill="#a29b90" opacity=".8"/><path d="M-3 248.4L78.8 243.6M115.4 241.2L213 236.8" stroke="#b9b0a0" stroke-width="1.8"/></g><rect x="0" y="288" width="210" height="40" fill="#141414" opacity=".66"/></g></svg>
<div class="panel" style="left:220px;top:528px;width:1816px;height:340px"></div>
<div class="t b" style="left:235px;top:546px;font-size:14px;color:#222"><i>项</i><i>目</i><i>资</i><i>金</i></div>
<div class="a" style="left:320.0px;top:549px;width:25px;height:14px;border-radius:3px;background:#5f7ce0"></div>
<div class="t" style="left:350.3px;top:546px;font-size:12px;color:#333"><i>计</i><i>划</i><i>投</i><i>资</i><i>金</i><i>额</i></div>
<div class="a" style="left:432.1px;top:549px;width:25px;height:14px;border-radius:3px;background:#52d3ab"></div>
<div class="t" style="left:462.4px;top:546px;font-size:12px;color:#333"><i>资</i><i>金</i><i>到</i><i>位</i><i>金</i><i>额</i></div>
<div class="a" style="left:544.1px;top:549px;width:25px;height:14px;border-radius:3px;background:#5d7092"></div>
<div class="t" style="left:574.4px;top:546px;font-size:12px;color:#333"><i>已</i><i>签</i><i>合</i><i>同</i><i>金</i><i>额</i></div>
<div class="a" style="left:656.1px;top:549px;width:25px;height:14px;border-radius:3px;background:#f6bd16"></div>
<div class="t" style="left:686.4px;top:546px;font-size:12px;color:#333"><i>资</i><i>金</i><i>支</i><i>付</i><i>金</i><i>额</i></div>
<div class="a" style="left:768.2px;top:549px;width:25px;height:14px;border-radius:3px;background:#f66e6c"></div>
<div class="t" style="left:798.5px;top:546px;font-size:12px;color:#333"><i>剩</i><i>余</i><i>支</i><i>付</i><i>金</i><i>额</i></div>
<div class="t" style="left:281px;top:573px;font-size:12px;color:#555"><i>金</i><i>额</i><i>：</i><i>万</i><i>元</i></div>
<div class="t r" style="left:243px;top:593.5px;width:60px;font-size:12.3px;color:#555">5,000</div>
<div class="t r" style="left:243px;top:628.9px;width:60px;font-size:12.3px;color:#555">4,000</div>
<div class="t r" style="left:243px;top:664.3px;width:60px;font-size:12.3px;color:#555">3,000</div>
<div class="t r" style="left:243px;top:699.7px;width:60px;font-size:12.3px;color:#555">2,000</div>
<div class="t r" style="left:243px;top:735.1px;width:60px;font-size:12.3px;color:#555">1,000</div>
<div class="t r" style="left:243px;top:770.5px;width:60px;font-size:12.3px;color:#555">0</div>
<svg class="a" style="left:0px;top:0px" width="2520" height="1092" viewBox="0 0 2520 1092" ><path d="M311 603.5H1492" stroke="#dcdcdc" stroke-width="1" stroke-dasharray="4 3"/><path d="M311 638.9H1492" stroke="#dcdcdc" stroke-width="1" stroke-dasharray="4 3"/><path d="M311 674.3H1492" stroke="#dcdcdc" stroke-width="1" stroke-dasharray="4 3"/><path d="M311 709.7H1492" stroke="#dcdcdc" stroke-width="1" stroke-dasharray="4 3"/><path d="M311 745.1H1492" stroke="#dcdcdc" stroke-width="1" stroke-dasharray="4 3"/><path d="M311 780.5H1492" stroke="#dcdcdc" stroke-width="1" stroke-dasharray="4 3"/><path d="M311.5 780.5V785.5M901.5 780.5V785.5M1491.5 780.5V785.5" stroke="#d4d4d4" stroke-width="1"/><rect x="544.5" y="637.3" width="20.2" height="143.2" fill="#5f7ce0"/><rect x="570.5" y="637.3" width="20.2" height="143.2" fill="#52d3ab"/><rect x="596.5" y="732.2" width="20.2" height="48.3" fill="#5d7092"/><rect x="622.6" y="752.4" width="20.2" height="28.1" fill="#f6bd16"/><rect x="648.6" y="665.4" width="20.2" height="115.1" fill="#f66e6c"/><rect x="1134.5" y="636.8" width="20.2" height="143.7" fill="#5f7ce0"/><rect x="1160.6" y="730.8" width="20.2" height="49.7" fill="#52d3ab"/><rect x="1186.7" y="693.6" width="20.2" height="86.9" fill="#5d7092"/><rect x="1212.8" y="750.1" width="20.2" height="30.4" fill="#f6bd16"/><rect x="1238.8" y="761.2" width="20.2" height="19.3" fill="#f66e6c"/></svg>
<div class="t c" style="left:546.3px;top:785.5px;width:120px;font-size:12px;color:#555"><i>东</i><i>北</i><i>林</i><i>业</i><i>大</i><i>学</i><i>教</i><i>学</i></div>
<div class="t c" style="left:546.3px;top:797.4px;width:120px;font-size:12px;color:#555"><i>主</i><i>楼</i><i>外</i><i>墙</i><i>及</i><i>防</i><i>水</i><i>维</i></div>
<div class="t c" style="left:546.3px;top:809.3px;width:120px;font-size:12px;color:#555"><i>修</i><i>工</i><i>程</i></div>
<div class="t c" style="left:1136.7px;top:785.5px;width:120px;font-size:12px;color:#555"><i>东</i><i>北</i><i>多</i><i>年</i><i>冻</i><i>土</i><i>区</i><i>地</i></div>
<div class="t c" style="left:1136.7px;top:797.4px;width:120px;font-size:12px;color:#555"><i>质</i><i>环</i><i>境</i><i>系</i><i>统</i><i>教</i><i>育</i><i>部</i></div>
<div class="t c" style="left:1136.7px;top:809.3px;width:120px;font-size:12px;color:#555"><i>野</i><i>外</i><i>科</i><i>学</i><i>观</i><i>测</i><i>研</i><i>究</i></div>
<div class="t c" style="left:1136.7px;top:821.2px;width:120px;font-size:12px;color:#555"><i>站</i></div>
<div class="panel" style="left:220px;top:883px;width:1128px;height:220px"></div>
<div class="hl" style="left:235px;top:934px;width:1098px;background:#dcdde0"></div>
<div class="a" style="left:235px;top:898px;width:130px;height:37px;background:#fff;border:1px solid #dcdde0;border-bottom:none;border-top:2px solid #187bff"></div>
<div class="t c" style="left:235px;top:908px;width:130px;font-size:14px;color:#187bff"><i>我</i><i>的</i><i>待</i><i>审</i><i>批</i><i>事</i><i>宜</i></div>
<div class="t" style="left:383px;top:907px;font-size:14px;color:#333"><i>我</i><i>的</i><i>发</i><i>起</i></div>
<div class="t r" style="left:1272px;top:904px;width:60px;font-size:12px;color:#187bff"><i>更</i><i>多</i></div>
<div class="tbl" style="left:235px;top:945px;width:1098px;height:170px;overflow:hidden;background:#fff"><div class="a" style="left:0;top:0;width:1098px;height:33px;background:#f1f4fc"></div><div class="a" style="left:0;top:34px;width:1098px;height:41px;background:#f9f9f9"></div></div>
<div class="hl" style="left:236px;top:978px;width:844px"></div>
<div class="hl" style="left:236px;top:1020px;width:1096px"></div>
<div class="vl" style="left:593px;top:946px;height:32px"></div>
<div class="vl" style="left:836px;top:946px;height:32px"></div>
<div class="t b" style="left:244px;top:952px;font-size:12px"><i>标</i><i>题</i></div>
<div class="t b c" style="left:664px;top:952px;width:100px;font-size:12px"><i>发</i><i>起</i><i>人</i></div>
<div class="t b c" style="left:908px;top:952px;width:100px;font-size:12px"><i>发</i><i>起</i><i>时</i><i>间</i></div>
<div class="t c" style="left:733.5px;top:989px;width:100px;font-size:12px"><i>无</i><i>数</i><i>据</i></div>
<div class="panel" style="left:1364px;top:883px;width:1127px;height:220px"></div>
<div class="t b" style="left:1379px;top:907px;font-size:14px;color:#222"><i>参</i><i>会</i><i>预</i><i>警</i></div>
<div class="tbl" style="left:1379px;top:945px;width:1097px;height:170px;overflow:hidden;background:#fff"><div class="a" style="left:0;top:0;width:1097px;height:33px;background:#f1f4fc"></div></div>
<div class="hl" style="left:1380px;top:978px;width:844px"></div>
<div class="hl" style="left:1380px;top:1020px;width:1095px"></div>
<div class="vl" style="left:1590px;top:946px;height:32px"></div>
<div class="vl" style="left:1801px;top:946px;height:32px"></div>
<div class="vl" style="left:2012px;top:946px;height:32px"></div>
<div class="t b" style="left:1388px;top:952px;font-size:12px"><i>会</i><i>议</i><i>主</i><i>题</i></div>
<div class="t b" style="left:1599px;top:952px;font-size:12px"><i>会</i><i>议</i><i>室</i></div>
<div class="t b c" style="left:1856.5px;top:952px;width:100px;font-size:12px"><i>会</i><i>议</i><i>开</i><i>始</i><i>时</i><i>间</i></div>
<div class="t b" style="left:2021px;top:952px;font-size:12px"><i>参</i><i>会</i><i>人</i><i>员</i></div>
<div class="t c" style="left:1851.5px;top:989.5px;width:150px;font-size:12px"><i>没</i><i>有</i><i>找</i><i>到</i><i>匹</i><i>配</i><i>的</i><i>记</i><i>录</i></div>
</div></body></html>
